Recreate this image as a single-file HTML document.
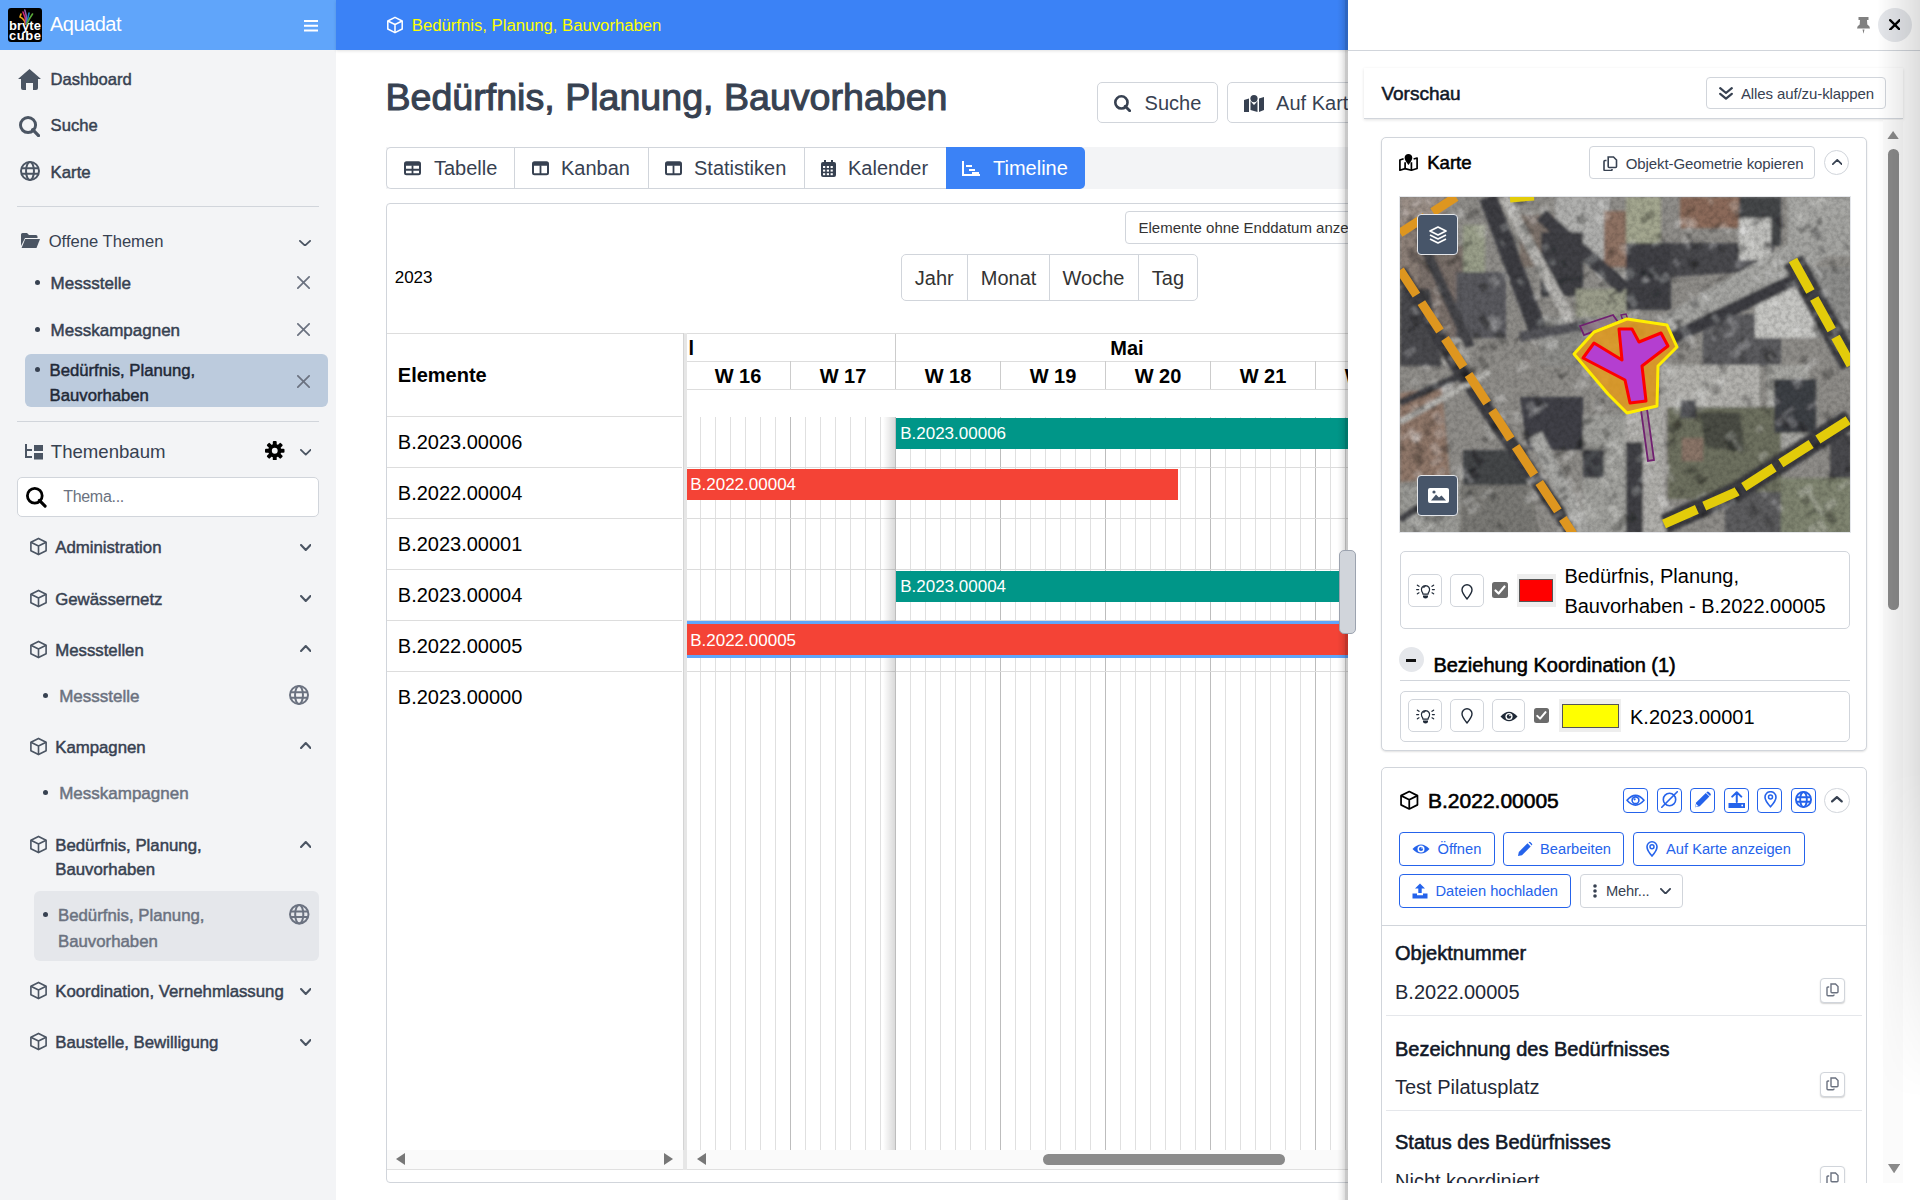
<!DOCTYPE html>
<html><head><meta charset="utf-8"><style>
*{box-sizing:border-box;margin:0;padding:0}
html,body{width:1920px;height:1200px;overflow:hidden;background:#fff;font-family:"Liberation Sans",sans-serif;color:#374151}
.a{position:absolute}
.t{position:absolute;white-space:nowrap;line-height:1}
svg{display:block}
</style></head><body>
<div class="a" style="left:0.0px;top:0.0px;width:336.0px;height:1200.0px;background:#f3f4f6"></div>
<div class="a" style="left:0.0px;top:0.0px;width:336.0px;height:50.0px;background:#60a5fa"></div>
<div class="a" style="left:8px;top:8px;width:34px;height:34px;background:#000;border-radius:3px;overflow:hidden"></div>
<div class="t" style="left:9.1px;top:18.90px;font-size:13px;color:#fff;font-weight:bold;letter-spacing:0px;">bryte</div>
<div class="t" style="left:9.1px;top:29.40px;font-size:13px;color:#fff;font-weight:bold;letter-spacing:0.5px;">cube</div>
<svg class="a" style="left:18.0px;top:9.0px;" width="16" height="16" viewBox="0 0 16 16"><g fill="none" stroke-width="1.6" stroke-linecap="round"><path d="M7.5 15 Q6.5 10 2 8 M3 5 L2 8" stroke="#e8a21a"/><path d="M7.8 15 Q8 9 5 3" stroke="#d2236e"/><path d="M8.2 15 Q9 7 6.8 1" stroke="#8e5aa8"/><path d="M8.5 15 Q10 9 11 4" stroke="#1e7fc0"/><path d="M8.8 15 Q11 10 14.5 5" stroke="#5aa83a"/></g></svg>
<div class="t" style="left:50.0px;top:14.07px;font-size:20px;color:#fff;font-weight:normal;letter-spacing:-0.5px;">Aquadat</div>
<svg class="a" style="left:304.0px;top:20.0px;" width="14" height="11.5" viewBox="0 0 14 11.5"><rect x="0" y="0" width="14" height="2" fill="#fff"/><rect x="0" y="4.75" width="14" height="2" fill="#fff"/><rect x="0" y="9.5" width="14" height="2" fill="#fff"/></svg>
<svg class="a" style="left:18.0px;top:69.0px;" width="23" height="21" viewBox="0 0 23 21"><path d="M11.5 0 L23 10 L20 10 L20 19 Q20 21 18 21 L15 21 L15 14 L8 14 L8 21 L5 21 Q3 21 3 19 L3 10 L0 10 Z" fill="#4b5563"/></svg>
<div class="t" style="left:50.6px;top:71.95px;font-size:16.6px;color:#374151;font-weight:normal;letter-spacing:0px;-webkit-text-stroke:0.46px #374151;">Dashboard</div>
<svg class="a" style="left:19.0px;top:116.0px;" width="21" height="21" viewBox="0 0 21 21"><circle cx="9.03" cy="9.03" r="7.56" fill="none" stroke="#4b5563" stroke-width="2.94"/><line x1="13.72" y1="13.72" x2="19.53" y2="19.53" stroke="#4b5563" stroke-width="3.23" stroke-linecap="round"/></svg>
<div class="t" style="left:50.6px;top:117.95px;font-size:16.6px;color:#374151;font-weight:normal;letter-spacing:0px;-webkit-text-stroke:0.46px #374151;">Suche</div>
<svg class="a" style="left:19.5px;top:161.0px;" width="20" height="20" viewBox="0 0 20 20"><g fill="none" stroke="#4b5563" stroke-width="2"><circle cx="10.0" cy="10.0" r="9.0"/><ellipse cx="10.0" cy="10.0" rx="3.96" ry="9.0"/><path d="M1.41 7.30 H18.59 M1.41 12.70 H18.59"/></g></svg>
<div class="t" style="left:50.6px;top:164.78px;font-size:16.8px;color:#374151;font-weight:normal;letter-spacing:0px;-webkit-text-stroke:0.47px #374151;">Karte</div>
<div class="a" style="left:17.0px;top:205.5px;width:302.0px;height:1.0px;background:#d1d5db"></div>
<svg class="a" style="left:21.0px;top:233.0px;" width="19" height="15" viewBox="0 0 19 15"><path d="M0 1.5 Q0 0 1.5 0 L6 0 L8 2 L15 2 Q16.5 2 16.5 3.5 L16.5 5 L4 5 L0 13 Z" fill="#4b5563"/><path d="M4.2 6 L19 6 L15.5 15 L0.6 15 Z" fill="#4b5563"/></svg>
<div class="t" style="left:48.7px;top:233.95px;font-size:16.6px;color:#374151;font-weight:normal;letter-spacing:0px;">Offene Themen</div>
<svg class="a" style="left:299.0px;top:239.5px;" width="12" height="6.5" viewBox="0 0 12 6.5"><path d="M0.9 0.9 L6.0 5.6 L11.1 0.9" fill="none" stroke="#4b5563" stroke-width="1.8" stroke-linecap="round" stroke-linejoin="round"/></svg>
<div class="a" style="left:34.5px;top:279.5px;width:5.0px;height:5.0px;background:#374151;border-radius:50%"></div>
<div class="t" style="left:50.6px;top:274.61px;font-size:17px;color:#374151;font-weight:normal;letter-spacing:0px;-webkit-text-stroke:0.48px #374151;">Messstelle</div>
<svg class="a" style="left:297.0px;top:275.5px;" width="13" height="13" viewBox="0 0 13 13"><path d="M0.85 0.85 L12.15 12.15 M12.15 0.85 L0.85 12.15" stroke="#6b7280" stroke-width="1.7" stroke-linecap="round"/></svg>
<div class="a" style="left:34.5px;top:326.5px;width:5.0px;height:5.0px;background:#374151;border-radius:50%"></div>
<div class="t" style="left:50.6px;top:321.61px;font-size:17px;color:#374151;font-weight:normal;letter-spacing:0px;-webkit-text-stroke:0.48px #374151;">Messkampagnen</div>
<svg class="a" style="left:297.0px;top:322.5px;" width="13" height="13" viewBox="0 0 13 13"><path d="M0.85 0.85 L12.15 12.15 M12.15 0.85 L0.85 12.15" stroke="#6b7280" stroke-width="1.7" stroke-linecap="round"/></svg>
<div class="a" style="left:25.0px;top:354.4px;width:302.6px;height:53.1px;background:#bccbdd;border-radius:6px"></div>
<div class="a" style="left:34.5px;top:367.0px;width:5.0px;height:5.0px;background:#374151;border-radius:50%"></div>
<div class="t" style="left:49.6px;top:362.86px;font-size:16.7px;color:#1f2937;font-weight:normal;letter-spacing:0px;-webkit-text-stroke:0.47px #1f2937;">Bedürfnis, Planung,</div>
<div class="t" style="left:49.6px;top:387.66px;font-size:16.7px;color:#1f2937;font-weight:normal;letter-spacing:0px;-webkit-text-stroke:0.47px #1f2937;">Bauvorhaben</div>
<svg class="a" style="left:297.0px;top:374.5px;" width="13" height="13" viewBox="0 0 13 13"><path d="M0.85 0.85 L12.15 12.15 M12.15 0.85 L0.85 12.15" stroke="#6b7280" stroke-width="1.7" stroke-linecap="round"/></svg>
<div class="a" style="left:17.0px;top:421.0px;width:302.0px;height:1.0px;background:#d1d5db"></div>
<svg class="a" style="left:24.8px;top:444.0px;" width="18" height="16" viewBox="0 0 18 16"><path d="M1 0 V13 H7" fill="none" stroke="#4b5563" stroke-width="2"/><path d="M1 6 H7" stroke="#4b5563" stroke-width="2"/><rect x="9" y="1" width="9" height="6" fill="#4b5563"/><rect x="9" y="9" width="9" height="6.5" fill="#4b5563"/></svg>
<div class="t" style="left:50.8px;top:442.76px;font-size:18.6px;color:#374151;font-weight:normal;letter-spacing:0px;">Themenbaum</div>
<svg class="a" style="left:265.0px;top:440.7px;" width="19.5" height="19.5" viewBox="0 0 20 20"><g fill="#000"><circle cx="10" cy="10" r="6.8"/><rect x="8" y="0" width="4" height="5" rx="1" transform="rotate(0 10 10)"/><rect x="8" y="0" width="4" height="5" rx="1" transform="rotate(45 10 10)"/><rect x="8" y="0" width="4" height="5" rx="1" transform="rotate(90 10 10)"/><rect x="8" y="0" width="4" height="5" rx="1" transform="rotate(135 10 10)"/><rect x="8" y="0" width="4" height="5" rx="1" transform="rotate(180 10 10)"/><rect x="8" y="0" width="4" height="5" rx="1" transform="rotate(225 10 10)"/><rect x="8" y="0" width="4" height="5" rx="1" transform="rotate(270 10 10)"/><rect x="8" y="0" width="4" height="5" rx="1" transform="rotate(315 10 10)"/></g><circle cx="10" cy="10" r="3" fill="#f3f4f6"/></svg>
<svg class="a" style="left:299.6px;top:449.0px;" width="11.5" height="6.5" viewBox="0 0 11.5 6.5"><path d="M0.9 0.9 L5.75 5.6 L10.6 0.9" fill="none" stroke="#4b5563" stroke-width="1.8" stroke-linecap="round" stroke-linejoin="round"/></svg>
<div class="a" style="left:17.4px;top:476.7px;width:301.4px;height:40.7px;background:#fff;border:1px solid #d1d5db;border-radius:5px"></div>
<svg class="a" style="left:26.0px;top:487.0px;" width="20.5" height="20.5" viewBox="0 0 20.5 20.5"><circle cx="8.78" cy="8.78" r="7.38" fill="none" stroke="#000" stroke-width="2.80"/><line x1="13.36" y1="13.36" x2="19.10" y2="19.10" stroke="#000" stroke-width="3.08" stroke-linecap="round"/></svg>
<div class="t" style="left:63.2px;top:488.76px;font-size:16px;color:#6b7280;font-weight:normal;letter-spacing:-0.3px;">Thema...</div>
<svg class="a" style="left:28.5px;top:537.3px;" width="19" height="19" viewBox="0 0 20 20"><g fill="none" stroke="#4b5563" stroke-width="1.7" stroke-linejoin="round"><path d="M10 1.5 L18 5.5 L18 14.5 L10 18.5 L2 14.5 L2 5.5 Z"/><path d="M2 5.5 L10 9.5 L18 5.5 M10 9.5 V18.5"/></g></svg>
<div class="t" style="left:55.2px;top:540.38px;font-size:16.8px;color:#374151;font-weight:normal;letter-spacing:0px;-webkit-text-stroke:0.47px #374151;">Administration</div>
<svg class="a" style="left:299.6px;top:544.0px;" width="11.5" height="7" viewBox="0 0 11.5 7"><path d="M1.05 1.05 L5.75 5.95 L10.45 1.05" fill="none" stroke="#4b5563" stroke-width="2.1" stroke-linecap="round" stroke-linejoin="round"/></svg>
<svg class="a" style="left:28.5px;top:588.5px;" width="19" height="19" viewBox="0 0 20 20"><g fill="none" stroke="#4b5563" stroke-width="1.7" stroke-linejoin="round"><path d="M10 1.5 L18 5.5 L18 14.5 L10 18.5 L2 14.5 L2 5.5 Z"/><path d="M2 5.5 L10 9.5 L18 5.5 M10 9.5 V18.5"/></g></svg>
<div class="t" style="left:55.2px;top:591.58px;font-size:16.8px;color:#374151;font-weight:normal;letter-spacing:0px;-webkit-text-stroke:0.47px #374151;">Gewässernetz</div>
<svg class="a" style="left:299.6px;top:595.2px;" width="11.5" height="7" viewBox="0 0 11.5 7"><path d="M1.05 1.05 L5.75 5.95 L10.45 1.05" fill="none" stroke="#4b5563" stroke-width="2.1" stroke-linecap="round" stroke-linejoin="round"/></svg>
<svg class="a" style="left:28.5px;top:639.5px;" width="19" height="19" viewBox="0 0 20 20"><g fill="none" stroke="#4b5563" stroke-width="1.7" stroke-linejoin="round"><path d="M10 1.5 L18 5.5 L18 14.5 L10 18.5 L2 14.5 L2 5.5 Z"/><path d="M2 5.5 L10 9.5 L18 5.5 M10 9.5 V18.5"/></g></svg>
<div class="t" style="left:55.2px;top:642.58px;font-size:16.8px;color:#374151;font-weight:normal;letter-spacing:0px;-webkit-text-stroke:0.47px #374151;">Messstellen</div>
<svg class="a" style="left:299.6px;top:645.3px;" width="11.5" height="7" viewBox="0 0 11.5 7"><path d="M1.05 5.95 L5.75 1.05 L10.45 5.95" fill="none" stroke="#4b5563" stroke-width="2.1" stroke-linecap="round" stroke-linejoin="round"/></svg>
<div class="a" style="left:42.8px;top:693.0px;width:5.0px;height:5.0px;background:#374151;border-radius:50%"></div>
<div class="t" style="left:59.2px;top:687.61px;font-size:17px;color:#6b7280;font-weight:normal;letter-spacing:0px;-webkit-text-stroke:0.48px #6b7280;">Messstelle</div>
<svg class="a" style="left:289.3px;top:684.5px;" width="20" height="20" viewBox="0 0 20 20"><g fill="none" stroke="#6b7280" stroke-width="2"><circle cx="10.0" cy="10.0" r="9.0"/><ellipse cx="10.0" cy="10.0" rx="3.96" ry="9.0"/><path d="M1.41 7.30 H18.59 M1.41 12.70 H18.59"/></g></svg>
<svg class="a" style="left:28.5px;top:736.5px;" width="19" height="19" viewBox="0 0 20 20"><g fill="none" stroke="#4b5563" stroke-width="1.7" stroke-linejoin="round"><path d="M10 1.5 L18 5.5 L18 14.5 L10 18.5 L2 14.5 L2 5.5 Z"/><path d="M2 5.5 L10 9.5 L18 5.5 M10 9.5 V18.5"/></g></svg>
<div class="t" style="left:55.2px;top:739.58px;font-size:16.8px;color:#374151;font-weight:normal;letter-spacing:0px;-webkit-text-stroke:0.47px #374151;">Kampagnen</div>
<svg class="a" style="left:299.6px;top:742.3px;" width="11.5" height="7" viewBox="0 0 11.5 7"><path d="M1.05 5.95 L5.75 1.05 L10.45 5.95" fill="none" stroke="#4b5563" stroke-width="2.1" stroke-linecap="round" stroke-linejoin="round"/></svg>
<div class="a" style="left:42.8px;top:790.0px;width:5.0px;height:5.0px;background:#374151;border-radius:50%"></div>
<div class="t" style="left:59.2px;top:784.81px;font-size:17px;color:#6b7280;font-weight:normal;letter-spacing:0px;-webkit-text-stroke:0.48px #6b7280;">Messkampagnen</div>
<svg class="a" style="left:28.5px;top:834.7px;" width="19" height="19" viewBox="0 0 20 20"><g fill="none" stroke="#4b5563" stroke-width="1.7" stroke-linejoin="round"><path d="M10 1.5 L18 5.5 L18 14.5 L10 18.5 L2 14.5 L2 5.5 Z"/><path d="M2 5.5 L10 9.5 L18 5.5 M10 9.5 V18.5"/></g></svg>
<div class="t" style="left:55.2px;top:837.78px;font-size:16.8px;color:#374151;font-weight:normal;letter-spacing:0px;-webkit-text-stroke:0.47px #374151;">Bedürfnis, Planung,</div>
<div class="t" style="left:55.2px;top:862.48px;font-size:16.8px;color:#374151;font-weight:normal;letter-spacing:0px;-webkit-text-stroke:0.47px #374151;">Bauvorhaben</div>
<svg class="a" style="left:299.6px;top:840.5px;" width="11.5" height="7" viewBox="0 0 11.5 7"><path d="M1.05 5.95 L5.75 1.05 L10.45 5.95" fill="none" stroke="#4b5563" stroke-width="2.1" stroke-linecap="round" stroke-linejoin="round"/></svg>
<div class="a" style="left:33.9px;top:891.2px;width:285.0px;height:70.3px;background:#e5e7eb;border-radius:6px"></div>
<div class="a" style="left:42.8px;top:912.0px;width:5.0px;height:5.0px;background:#374151;border-radius:50%"></div>
<div class="t" style="left:58.0px;top:908.38px;font-size:16.8px;color:#6b7280;font-weight:normal;letter-spacing:0px;-webkit-text-stroke:0.47px #6b7280;">Bedürfnis, Planung,</div>
<div class="t" style="left:58.0px;top:933.78px;font-size:16.8px;color:#6b7280;font-weight:normal;letter-spacing:0px;-webkit-text-stroke:0.47px #6b7280;">Bauvorhaben</div>
<svg class="a" style="left:289.0px;top:904.0px;" width="20.5" height="20.5" viewBox="0 0 20.5 20.5"><g fill="none" stroke="#6b7280" stroke-width="2"><circle cx="10.25" cy="10.25" r="9.25"/><ellipse cx="10.25" cy="10.25" rx="4.07" ry="9.25"/><path d="M1.43 7.47 H19.07 M1.43 13.03 H19.07"/></g></svg>
<svg class="a" style="left:28.5px;top:981.3px;" width="19" height="19" viewBox="0 0 20 20"><g fill="none" stroke="#4b5563" stroke-width="1.7" stroke-linejoin="round"><path d="M10 1.5 L18 5.5 L18 14.5 L10 18.5 L2 14.5 L2 5.5 Z"/><path d="M2 5.5 L10 9.5 L18 5.5 M10 9.5 V18.5"/></g></svg>
<div class="t" style="left:55.2px;top:984.38px;font-size:16.8px;color:#374151;font-weight:normal;letter-spacing:0px;-webkit-text-stroke:0.47px #374151;">Koordination, Vernehmlassung</div>
<svg class="a" style="left:299.6px;top:988.0px;" width="11.5" height="7" viewBox="0 0 11.5 7"><path d="M1.05 1.05 L5.75 5.95 L10.45 1.05" fill="none" stroke="#4b5563" stroke-width="2.1" stroke-linecap="round" stroke-linejoin="round"/></svg>
<svg class="a" style="left:28.5px;top:1032.0px;" width="19" height="19" viewBox="0 0 20 20"><g fill="none" stroke="#4b5563" stroke-width="1.7" stroke-linejoin="round"><path d="M10 1.5 L18 5.5 L18 14.5 L10 18.5 L2 14.5 L2 5.5 Z"/><path d="M2 5.5 L10 9.5 L18 5.5 M10 9.5 V18.5"/></g></svg>
<div class="t" style="left:55.2px;top:1035.08px;font-size:16.8px;color:#374151;font-weight:normal;letter-spacing:0px;-webkit-text-stroke:0.47px #374151;">Baustelle, Bewilligung</div>
<svg class="a" style="left:299.6px;top:1038.7px;" width="11.5" height="7" viewBox="0 0 11.5 7"><path d="M1.05 1.05 L5.75 5.95 L10.45 1.05" fill="none" stroke="#4b5563" stroke-width="2.1" stroke-linecap="round" stroke-linejoin="round"/></svg>
<div class="a" style="left:336.0px;top:0.0px;width:1584.0px;height:50.0px;background:#3b82f6;box-shadow:0 1px 3px rgba(0,0,0,0.12)"></div>
<svg class="a" style="left:385.5px;top:16.0px;" width="18" height="18" viewBox="0 0 20 20"><g fill="none" stroke="#fff" stroke-width="1.7" stroke-linejoin="round"><path d="M10 1.5 L18 5.5 L18 14.5 L10 18.5 L2 14.5 L2 5.5 Z"/><path d="M2 5.5 L10 9.5 L18 5.5 M10 9.5 V18.5"/></g></svg>
<div class="t" style="left:411.8px;top:17.86px;font-size:16.7px;color:#ffff00;font-weight:normal;letter-spacing:0px;">Bedürfnis, Planung, Bauvorhaben</div>
<div class="t" style="left:385.5px;top:79.17px;font-size:37.6px;color:#374151;font-weight:normal;letter-spacing:0px;-webkit-text-stroke:1.05px #374151;">Bedürfnis, Planung, Bauvorhaben</div>
<div class="a" style="left:1097.2px;top:82.1px;width:120.5px;height:41.4px;background:#fff;border:1px solid #d1d5db;border-radius:5px"></div>
<svg class="a" style="left:1114.3px;top:95.0px;" width="17" height="17" viewBox="0 0 17 17"><circle cx="7.42" cy="7.42" r="6.12" fill="none" stroke="#374151" stroke-width="2.60"/><line x1="11.21" y1="11.21" x2="15.70" y2="15.70" stroke="#374151" stroke-width="2.86" stroke-linecap="round"/></svg>
<div class="t" style="left:1144.6px;top:92.77px;font-size:20px;color:#374151;font-weight:normal;letter-spacing:0px;">Suche</div>
<div class="a" style="left:1227.3px;top:82.1px;width:300.0px;height:41.4px;background:#fff;border:1px solid #d1d5db;border-radius:5px"></div>
<svg class="a" style="left:1244.4px;top:95.0px;" width="20" height="17" viewBox="0 0 20 17"><path d="M0 5 L5 3.5 L5 17 L0 17 Z M6.5 6 L9 9 L10 10 L11 9 L13.5 6 V17 L6.5 15 Z M15 3.5 L20 2 L20 15 L15 17 Z" fill="#374151"/><circle cx="10" cy="3.6" r="3.6" fill="#374151"/></svg>
<div class="t" style="left:1276.1px;top:92.77px;font-size:20px;color:#374151;font-weight:normal;letter-spacing:0px;">Auf Karte</div>
<div class="a" style="left:386.0px;top:147.0px;width:1200.0px;height:41.6px;background:#f3f4f6"></div>
<div class="a" style="left:386.0px;top:147.0px;width:560.0px;height:41.6px;background:#fff;border:1px solid #d1d5db;border-right:none;border-radius:5px 0 0 5px"></div>
<div class="a" style="left:514.0px;top:147.0px;width:1.0px;height:41.6px;background:#d1d5db"></div>
<div class="a" style="left:647.5px;top:147.0px;width:1.0px;height:41.6px;background:#d1d5db"></div>
<div class="a" style="left:803.6px;top:147.0px;width:1.0px;height:41.6px;background:#d1d5db"></div>
<div class="a" style="left:946.0px;top:147.0px;width:139.0px;height:41.6px;background:#3b82f6;border-radius:0 5px 5px 0"></div>
<svg class="a" style="left:404.0px;top:161.0px;" width="17" height="14.5" viewBox="0 0 17 14"><rect x="1" y="1" width="15" height="12" rx="1.5" fill="none" stroke="#374151" stroke-width="2"/><rect x="1" y="1" width="15" height="3.5" fill="#374151"/><path d="M8.5 4 V13 M1 8.5 H16" stroke="#374151" stroke-width="1.8"/></svg>
<div class="t" style="left:434.0px;top:158.07px;font-size:20px;color:#374151;font-weight:normal;letter-spacing:0px;">Tabelle</div>
<svg class="a" style="left:531.5px;top:161.0px;" width="17" height="14.5" viewBox="0 0 17 14"><rect x="1" y="1" width="15" height="12" rx="1.5" fill="none" stroke="#374151" stroke-width="2"/><rect x="1" y="1" width="15" height="3.5" fill="#374151"/><path d="M8.5 4 V13" stroke="#374151" stroke-width="1.8"/></svg>
<div class="t" style="left:561.0px;top:158.07px;font-size:20px;color:#374151;font-weight:normal;letter-spacing:0px;">Kanban</div>
<svg class="a" style="left:664.5px;top:161.0px;" width="17" height="14.5" viewBox="0 0 17 14"><rect x="1" y="1" width="15" height="12" rx="1.5" fill="none" stroke="#374151" stroke-width="2"/><rect x="1" y="1" width="15" height="3.5" fill="#374151"/><path d="M8.5 4 V13" stroke="#374151" stroke-width="1.8"/></svg>
<div class="t" style="left:694.0px;top:158.07px;font-size:20px;color:#374151;font-weight:normal;letter-spacing:0px;">Statistiken</div>
<svg class="a" style="left:820.5px;top:159.5px;" width="15" height="17" viewBox="0 0 15 17"><rect x="3" y="0" width="2" height="3" fill="#374151"/><rect x="10" y="0" width="2" height="3" fill="#374151"/><rect x="0" y="2" width="15" height="15" rx="2" fill="#374151"/><rect x="2.0" y="6.0" width="2.2" height="2" fill="#fff"/><rect x="2.0" y="9.6" width="2.2" height="2" fill="#fff"/><rect x="2.0" y="13.2" width="2.2" height="2" fill="#fff"/><rect x="5.8" y="6.0" width="2.2" height="2" fill="#fff"/><rect x="5.8" y="9.6" width="2.2" height="2" fill="#fff"/><rect x="5.8" y="13.2" width="2.2" height="2" fill="#fff"/><rect x="9.6" y="6.0" width="2.2" height="2" fill="#fff"/><rect x="9.6" y="9.6" width="2.2" height="2" fill="#fff"/><rect x="9.6" y="13.2" width="2.2" height="2" fill="#fff"/></svg>
<div class="t" style="left:848.0px;top:158.07px;font-size:20px;color:#374151;font-weight:normal;letter-spacing:0px;">Kalender</div>
<svg class="a" style="left:962.0px;top:161.0px;" width="18" height="15" viewBox="0 0 18 15"><path d="M1 0 V14 H18" fill="none" stroke="#fff" stroke-width="2"/><rect x="4" y="4" width="6" height="2" fill="#fff"/><rect x="7" y="8" width="6" height="2" fill="#fff"/><rect x="10" y="11" width="7" height="2" fill="#fff"/></svg>
<div class="t" style="left:993.0px;top:158.07px;font-size:20px;color:#fff;font-weight:normal;letter-spacing:0px;">Timeline</div>
<div class="a" style="left:386.0px;top:202.7px;width:1100.0px;height:980.0px;background:#fff;border:1px solid #d1d5db;border-radius:4px"></div>
<div class="a" style="left:1125.0px;top:211.4px;width:300.0px;height:33.0px;background:#fff;border:1px solid #d1d5db;border-radius:4px"></div>
<div class="t" style="left:1138.5px;top:220.00px;font-size:15px;color:#333;font-weight:normal;letter-spacing:0px;">Elemente ohne Enddatum anzeigen</div>
<div class="t" style="left:394.7px;top:268.61px;font-size:17px;color:#000;font-weight:normal;letter-spacing:0px;">2023</div>
<div class="a" style="left:901.4px;top:254.2px;width:296.4px;height:47.2px;background:#fff;border:1px solid #d1d5db;border-radius:5px"></div>
<div class="a" style="left:967.4px;top:254.2px;width:1.0px;height:47.2px;background:#d1d5db"></div>
<div class="a" style="left:1049.4px;top:254.2px;width:1.0px;height:47.2px;background:#d1d5db"></div>
<div class="a" style="left:1137.6px;top:254.2px;width:1.0px;height:47.2px;background:#d1d5db"></div>
<div class="t" style="left:914.8px;top:267.67px;font-size:20px;color:#333;font-weight:normal;letter-spacing:0px;">Jahr</div>
<div class="t" style="left:980.8px;top:267.67px;font-size:20px;color:#333;font-weight:normal;letter-spacing:0px;">Monat</div>
<div class="t" style="left:1062.6px;top:267.67px;font-size:20px;color:#333;font-weight:normal;letter-spacing:0px;">Woche</div>
<div class="t" style="left:1151.8px;top:267.67px;font-size:20px;color:#333;font-weight:normal;letter-spacing:0px;">Tag</div>
<div class="a" style="left:387.0px;top:333.0px;width:1000.0px;height:1.0px;background:#ddd"></div>
<div class="t" style="left:397.8px;top:365.07px;font-size:20px;color:#000;font-weight:bold;letter-spacing:0px;">Elemente</div>
<div class="a" style="left:387.0px;top:416.0px;width:295.4px;height:1.0px;background:#ddd"></div>
<div class="a" style="left:387.0px;top:467.0px;width:295.4px;height:1.0px;background:#ddd"></div>
<div class="a" style="left:387.0px;top:518.0px;width:295.4px;height:1.0px;background:#ddd"></div>
<div class="a" style="left:387.0px;top:569.0px;width:295.4px;height:1.0px;background:#ddd"></div>
<div class="a" style="left:387.0px;top:620.0px;width:295.4px;height:1.0px;background:#ddd"></div>
<div class="a" style="left:387.0px;top:671.0px;width:295.4px;height:1.0px;background:#ddd"></div>
<div class="t" style="left:397.8px;top:431.57px;font-size:20px;color:#000;font-weight:normal;letter-spacing:0px;">B.2023.00006</div>
<div class="t" style="left:397.8px;top:482.57px;font-size:20px;color:#000;font-weight:normal;letter-spacing:0px;">B.2022.00004</div>
<div class="t" style="left:397.8px;top:533.57px;font-size:20px;color:#000;font-weight:normal;letter-spacing:0px;">B.2023.00001</div>
<div class="t" style="left:397.8px;top:584.57px;font-size:20px;color:#000;font-weight:normal;letter-spacing:0px;">B.2023.00004</div>
<div class="t" style="left:397.8px;top:635.57px;font-size:20px;color:#000;font-weight:normal;letter-spacing:0px;">B.2022.00005</div>
<div class="t" style="left:397.8px;top:686.57px;font-size:20px;color:#000;font-weight:normal;letter-spacing:0px;">B.2023.00000</div>
<div class="a" style="left:682.5px;top:333.0px;width:4.0px;height:817.0px;background:#e6e6e6"></div>
<div class="a" style="left:682.5px;top:333.0px;width:1.0px;height:817.0px;background:#d4d4d4"></div>
<div class="a" style="left:686.5px;top:361.0px;width:700.0px;height:1.0px;background:#ddd"></div>
<div class="a" style="left:686.5px;top:389.0px;width:700.0px;height:1.0px;background:#ddd"></div>
<div class="a" style="left:895.0px;top:334.0px;width:1.0px;height:55.0px;background:#ccc"></div>
<div class="t" style="left:738.0px;top:366.07px;font-size:20px;color:#000;font-weight:bold;letter-spacing:0px;transform:translateX(-50%)">W 16</div>
<div class="a" style="left:790.0px;top:361.0px;width:1.0px;height:28.0px;background:#ccc"></div>
<div class="t" style="left:843.0px;top:366.07px;font-size:20px;color:#000;font-weight:bold;letter-spacing:0px;transform:translateX(-50%)">W 17</div>
<div class="a" style="left:895.0px;top:361.0px;width:1.0px;height:28.0px;background:#ccc"></div>
<div class="t" style="left:948.0px;top:366.07px;font-size:20px;color:#000;font-weight:bold;letter-spacing:0px;transform:translateX(-50%)">W 18</div>
<div class="a" style="left:1000.0px;top:361.0px;width:1.0px;height:28.0px;background:#ccc"></div>
<div class="t" style="left:1053.0px;top:366.07px;font-size:20px;color:#000;font-weight:bold;letter-spacing:0px;transform:translateX(-50%)">W 19</div>
<div class="a" style="left:1105.0px;top:361.0px;width:1.0px;height:28.0px;background:#ccc"></div>
<div class="t" style="left:1158.0px;top:366.07px;font-size:20px;color:#000;font-weight:bold;letter-spacing:0px;transform:translateX(-50%)">W 20</div>
<div class="a" style="left:1210.0px;top:361.0px;width:1.0px;height:28.0px;background:#ccc"></div>
<div class="t" style="left:1263.0px;top:366.07px;font-size:20px;color:#000;font-weight:bold;letter-spacing:0px;transform:translateX(-50%)">W 21</div>
<div class="a" style="left:1315.0px;top:361.0px;width:1.0px;height:28.0px;background:#ccc"></div>
<div class="t" style="left:1368.0px;top:366.07px;font-size:20px;color:#000;font-weight:bold;letter-spacing:0px;transform:translateX(-50%)">W 22</div>
<div class="t" style="left:688.5px;top:337.77px;font-size:20px;color:#000;font-weight:bold;letter-spacing:0px;">l</div>
<div class="t" style="left:1127.0px;top:338.07px;font-size:20px;color:#000;font-weight:bold;letter-spacing:0px;transform:translateX(-50%)">Mai</div>
<div class="a" style="left:700.0px;top:417px;width:1px;height:732.7px;background:#e0e0e0"></div><div class="a" style="left:715.0px;top:417px;width:1px;height:732.7px;background:#e0e0e0"></div><div class="a" style="left:730.0px;top:417px;width:1px;height:732.7px;background:#e0e0e0"></div><div class="a" style="left:745.0px;top:417px;width:1px;height:732.7px;background:#e0e0e0"></div><div class="a" style="left:760.0px;top:417px;width:1px;height:732.7px;background:#e0e0e0"></div><div class="a" style="left:775.0px;top:417px;width:1px;height:732.7px;background:#e0e0e0"></div><div class="a" style="left:790.0px;top:417px;width:1px;height:732.7px;background:#bdbdbd"></div><div class="a" style="left:805.0px;top:417px;width:1px;height:732.7px;background:#e0e0e0"></div><div class="a" style="left:820.0px;top:417px;width:1px;height:732.7px;background:#e0e0e0"></div><div class="a" style="left:835.0px;top:417px;width:1px;height:732.7px;background:#e0e0e0"></div><div class="a" style="left:850.0px;top:417px;width:1px;height:732.7px;background:#e0e0e0"></div><div class="a" style="left:865.0px;top:417px;width:1px;height:732.7px;background:#e0e0e0"></div><div class="a" style="left:880.0px;top:417px;width:1px;height:732.7px;background:#e0e0e0"></div><div class="a" style="left:895.0px;top:417px;width:1px;height:732.7px;background:#bdbdbd"></div><div class="a" style="left:910.0px;top:417px;width:1px;height:732.7px;background:#e0e0e0"></div><div class="a" style="left:925.0px;top:417px;width:1px;height:732.7px;background:#e0e0e0"></div><div class="a" style="left:940.0px;top:417px;width:1px;height:732.7px;background:#e0e0e0"></div><div class="a" style="left:955.0px;top:417px;width:1px;height:732.7px;background:#e0e0e0"></div><div class="a" style="left:970.0px;top:417px;width:1px;height:732.7px;background:#e0e0e0"></div><div class="a" style="left:985.0px;top:417px;width:1px;height:732.7px;background:#e0e0e0"></div><div class="a" style="left:1000.0px;top:417px;width:1px;height:732.7px;background:#bdbdbd"></div><div class="a" style="left:1015.0px;top:417px;width:1px;height:732.7px;background:#e0e0e0"></div><div class="a" style="left:1030.0px;top:417px;width:1px;height:732.7px;background:#e0e0e0"></div><div class="a" style="left:1045.0px;top:417px;width:1px;height:732.7px;background:#e0e0e0"></div><div class="a" style="left:1060.0px;top:417px;width:1px;height:732.7px;background:#e0e0e0"></div><div class="a" style="left:1075.0px;top:417px;width:1px;height:732.7px;background:#e0e0e0"></div><div class="a" style="left:1090.0px;top:417px;width:1px;height:732.7px;background:#e0e0e0"></div><div class="a" style="left:1105.0px;top:417px;width:1px;height:732.7px;background:#bdbdbd"></div><div class="a" style="left:1120.0px;top:417px;width:1px;height:732.7px;background:#e0e0e0"></div><div class="a" style="left:1135.0px;top:417px;width:1px;height:732.7px;background:#e0e0e0"></div><div class="a" style="left:1150.0px;top:417px;width:1px;height:732.7px;background:#e0e0e0"></div><div class="a" style="left:1165.0px;top:417px;width:1px;height:732.7px;background:#e0e0e0"></div><div class="a" style="left:1180.0px;top:417px;width:1px;height:732.7px;background:#e0e0e0"></div><div class="a" style="left:1195.0px;top:417px;width:1px;height:732.7px;background:#e0e0e0"></div><div class="a" style="left:1210.0px;top:417px;width:1px;height:732.7px;background:#bdbdbd"></div><div class="a" style="left:1225.0px;top:417px;width:1px;height:732.7px;background:#e0e0e0"></div><div class="a" style="left:1240.0px;top:417px;width:1px;height:732.7px;background:#e0e0e0"></div><div class="a" style="left:1255.0px;top:417px;width:1px;height:732.7px;background:#e0e0e0"></div><div class="a" style="left:1270.0px;top:417px;width:1px;height:732.7px;background:#e0e0e0"></div><div class="a" style="left:1285.0px;top:417px;width:1px;height:732.7px;background:#e0e0e0"></div><div class="a" style="left:1300.0px;top:417px;width:1px;height:732.7px;background:#e0e0e0"></div><div class="a" style="left:1315.0px;top:417px;width:1px;height:732.7px;background:#bdbdbd"></div><div class="a" style="left:1330.0px;top:417px;width:1px;height:732.7px;background:#e0e0e0"></div><div class="a" style="left:1345.0px;top:417px;width:1px;height:732.7px;background:#e0e0e0"></div>
<div class="a" style="left:686.5px;top:467.0px;width:670.0px;height:1.0px;background:#dcdcdc"></div>
<div class="a" style="left:686.5px;top:518.0px;width:670.0px;height:1.0px;background:#dcdcdc"></div>
<div class="a" style="left:686.5px;top:569.0px;width:670.0px;height:1.0px;background:#dcdcdc"></div>
<div class="a" style="left:686.5px;top:620.0px;width:670.0px;height:1.0px;background:#dcdcdc"></div>
<div class="a" style="left:686.5px;top:671.0px;width:670.0px;height:1.0px;background:#dcdcdc"></div>
<div class="a" style="left:883.0px;top:417.0px;width:12.5px;height:732.7px;background:linear-gradient(to right,rgba(0,0,0,0),rgba(0,0,0,0.16))"></div>
<div class="a" style="left:895.0px;top:417.0px;width:1.0px;height:732.7px;background:#bdbdbd"></div>
<div class="a" style="left:896.0px;top:418.2px;width:460.0px;height:30.5px;background:#009688"></div>
<div class="t" style="left:900.2px;top:424.91px;font-size:17px;color:#fff;font-weight:normal;letter-spacing:0px;">B.2023.00006</div>
<div class="a" style="left:686.5px;top:469.0px;width:491.2px;height:31.0px;background:#f44336"></div>
<div class="t" style="left:690.2px;top:475.91px;font-size:17px;color:#fff;font-weight:normal;letter-spacing:0px;">B.2022.00004</div>
<div class="a" style="left:896.0px;top:571.0px;width:460.0px;height:30.7px;background:#009688"></div>
<div class="t" style="left:900.2px;top:577.91px;font-size:17px;color:#fff;font-weight:normal;letter-spacing:0px;">B.2023.00004</div>
<div class="a" style="left:686.5px;top:621.0px;width:670.0px;height:37.0px;background:#60a5fa"></div>
<div class="a" style="left:686.5px;top:624.0px;width:670.0px;height:31.0px;background:#f44336"></div>
<div class="t" style="left:690.2px;top:631.61px;font-size:17px;color:#fff;font-weight:normal;letter-spacing:0px;">B.2022.00005</div>
<div class="a" style="left:387.0px;top:1149.7px;width:1000.0px;height:19.5px;background:#fafafa"></div>
<div class="a" style="left:387.0px;top:1169.0px;width:1000.0px;height:1.0px;background:#e0e0e0"></div>
<div class="a" style="left:682.5px;top:1149.7px;width:4.0px;height:20.0px;background:#e6e6e6"></div>
<svg class="a" style="left:396.0px;top:1153.0px;" width="10" height="12" viewBox="0 0 10 12"><path d="M9 0 V12 L0 6 Z" fill="#777"/></svg>
<svg class="a" style="left:663.0px;top:1153.0px;" width="10" height="12" viewBox="0 0 10 12"><path d="M1 0 V12 L10 6 Z" fill="#777"/></svg>
<svg class="a" style="left:697.0px;top:1153.0px;" width="10" height="12" viewBox="0 0 10 12"><path d="M9 0 V12 L0 6 Z" fill="#777"/></svg>
<div class="a" style="left:1043.0px;top:1154.2px;width:241.7px;height:10.5px;background:#8a8a8a;border-radius:5.25px"></div>
<div class="a" style="left:1337.0px;top:0.0px;width:11.0px;height:1200.0px;background:linear-gradient(to right,rgba(0,0,0,0) 0%,rgba(0,0,0,0.05) 40%,rgba(0,0,0,0.13) 72%,rgba(0,0,0,0.21) 74%,rgba(0,0,0,0.22) 100%)"></div>
<div class="a" style="left:1347.5px;top:0.0px;width:572.5px;height:1200.0px;background:#fff"></div>
<div class="a" style="left:1347.5px;top:50.0px;width:572.5px;height:1.0px;background:#d1d5db"></div>
<svg class="a" style="left:1857.0px;top:17.0px;" width="13" height="17" viewBox="0 0 13 17"><path d="M1.5 0 H11.5 V3 H10 L10.3 7.5 Q13 9 13 11.5 H0 Q0 9 2.7 7.5 L3 3 H1.5 Z" fill="#808080"/><path d="M5.5 12.5 H7.5 L6.5 16.8 Z" fill="#808080"/></svg>
<div class="a" style="left:1878.0px;top:8.0px;width:34.0px;height:34.0px;background:#e5e7eb;border-radius:50%"></div>
<svg class="a" style="left:1888.7px;top:18.7px;" width="11.8" height="11.8" viewBox="0 0 11.8 11.8"><path d="M1.15 1.15 L10.65 10.65 M10.65 1.15 L1.15 10.65" stroke="#000" stroke-width="2.3" stroke-linecap="round"/></svg>
<div class="a" style="left:1363.6px;top:67.8px;width:539.6px;height:51.5px;background:#fff;box-shadow:0 1px 3px rgba(0,0,0,0.12);border-bottom:1px solid #d1d5db"></div>
<div class="t" style="left:1381.4px;top:84.22px;font-size:19px;color:#111827;font-weight:normal;letter-spacing:0px;-webkit-text-stroke:0.53px #111827;">Vorschau</div>
<div class="a" style="left:1706.4px;top:77.4px;width:179.5px;height:32.1px;background:#fff;border:1px solid #d1d5db;border-radius:4px"></div>
<svg class="a" style="left:1718.7px;top:87.0px;" width="14" height="13" viewBox="0 0 14 13"><path d="M1.2 1.2 L7 6 L12.8 1.2 M1.2 6.8 L7 11.6 L12.8 6.8" fill="none" stroke="#374151" stroke-width="2.2" stroke-linecap="round" stroke-linejoin="round"/></svg>
<div class="t" style="left:1740.9px;top:86.20px;font-size:15px;color:#374151;font-weight:normal;letter-spacing:-0.1px;">Alles auf/zu-klappen</div>
<div class="a" style="left:1883.0px;top:120.0px;width:20.0px;height:1062.5px;background:#fbfbfb"></div>
<svg class="a" style="left:1887.4px;top:130.7px;" width="12.2" height="8.6" viewBox="0 0 12.2 8.6"><path d="M6.1 0 L12.2 8.6 H0 Z" fill="#8a8a8a"/></svg>
<div class="a" style="left:1888.3px;top:149.2px;width:10.7px;height:461.0px;background:#8a8a8a;border-radius:5.3px"></div>
<svg class="a" style="left:1887.5px;top:1164.0px;" width="12.2" height="9.3" viewBox="0 0 12.2 9.3"><path d="M0 0 H12.2 L6.1 9.3 Z" fill="#8a8a8a"/></svg>
<div class="a" style="left:1877.0px;top:0.0px;width:43.0px;height:1100.0px;background:linear-gradient(to right,rgba(0,0,0,0),rgba(0,0,0,0.13));-webkit-mask-image:linear-gradient(to bottom,#000 70%,transparent)"></div>
<div class="a" style="left:1381.4px;top:137.4px;width:485.2px;height:613.6px;background:#fff;border:1px solid #d1d5db;border-radius:5px;box-shadow:0 1px 2px rgba(0,0,0,0.12)"></div>
<svg class="a" style="left:1399.1px;top:153.8px;" width="19" height="17" viewBox="0 0 19 17"><path d="M4.6 4.8 L0.9 6 V16.2 L6.1 14.6 L12.4 16.2 L18.1 14.5 V4 L14.6 5" fill="none" stroke="#000" stroke-width="1.7" stroke-linejoin="round"/><path d="M6.1 8.3 V14.6 M12.4 8.3 V16.2" stroke="#000" stroke-width="1.7"/><path d="M9.45 0 C7.3 0 5.6 1.7 5.6 3.85 C5.6 6.5 9.45 11 9.45 11 C9.45 11 13.3 6.5 13.3 3.85 C13.3 1.7 11.6 0 9.45 0 Z" fill="#000"/></svg>
<div class="t" style="left:1427.2px;top:154.26px;font-size:18.6px;color:#000;font-weight:normal;letter-spacing:0px;-webkit-text-stroke:0.52px #000;">Karte</div>
<div class="a" style="left:1589.0px;top:146.2px;width:226.4px;height:33.3px;background:#fff;border:1px solid #d1d5db;border-radius:4px"></div>
<svg class="a" style="left:1603.0px;top:155.5px;" width="14.5" height="15.5" viewBox="0 0 14.5 15.5"><path d="M5.2 1 H10.5 L13.5 4 V10.5 Q13.5 11.5 12.5 11.5 H6.2 Q5.2 11.5 5.2 10.5 Z" fill="none" stroke="#374151" stroke-width="1.6"/><path d="M3.5 4.5 H2 Q1 4.5 1 5.5 V13.5 Q1 14.5 2 14.5 H8 Q9 14.5 9 13.5 V13" fill="none" stroke="#374151" stroke-width="1.6"/></svg>
<div class="t" style="left:1625.8px;top:155.90px;font-size:15px;color:#374151;font-weight:normal;letter-spacing:-0.1px;">Objekt-Geometrie kopieren</div>
<div class="a" style="left:1824.1px;top:149.8px;width:25.2px;height:25.2px;background:#fff;border:1px solid #d1d5db;border-radius:50%"></div>
<svg class="a" style="left:1831.5px;top:158.8px;" width="10.5" height="6" viewBox="0 0 10.5 6"><path d="M0.85 5.15 L5.25 0.85 L9.65 5.15" fill="none" stroke="#374151" stroke-width="1.7" stroke-linecap="round" stroke-linejoin="round"/></svg>
<svg class="a" style="left:1399.5px;top:196.6px;outline:1px solid #e5e7eb" width="450" height="335.5" viewBox="0 0 450 335.5"><defs><filter id="nz" x="0" y="0" width="100%" height="100%"><feTurbulence type="fractalNoise" baseFrequency="0.22" numOctaves="3" seed="5"/><feColorMatrix type="matrix" values="0 0 0 0 0  0 0 0 0 0  0 0 0 0 0  0 0 0 -1.6 1.05"/></filter><filter id="nz2" x="0" y="0" width="100%" height="100%"><feTurbulence type="fractalNoise" baseFrequency="0.09" numOctaves="2" seed="11"/><feColorMatrix type="matrix" values="2.2 0 0 0 -0.6  2.2 0 0 0 -0.6  2.2 0 0 0 -0.6  0 0 0 0 1"/></filter></defs><defs><filter id="bl" x="-5%" y="-5%" width="110%" height="110%"><feGaussianBlur stdDeviation="1.6"/></filter></defs><rect width="450" height="335.5" fill="#8f8d89"/><g filter="url(#bl)"><polygon points="0,0 46,0 46,28 0,28" fill="#9a8e86"/><polygon points="0,28 18,28 18,92 0,92" fill="#8d8078"/><polygon points="18,49 63,49 63,141 18,141" fill="#7a706a"/><polygon points="0,92 30,92 42,169 0,169" fill="#4a4a4e"/><polygon points="42,141 70,141 70,169 42,169" fill="#a6a4a0"/><polygon points="63,28 85,28 85,77 63,77" fill="#9a9f8a"/><polygon points="56,75 106,75 106,141 56,141" fill="#5a5a5e"/><polygon points="120,18 155,18 155,70 120,70" fill="#7e736c"/><polygon points="155,0 210,0 210,63 155,63" fill="#b0b0ae"/><polygon points="204,14 226,14 226,70 204,70" fill="#8e7263"/><polygon points="141,35 183,35 183,99 141,99" fill="#3f4045"/><polygon points="176,92 226,92 226,120 176,120" fill="#9a9c8a"/><polygon points="140,120 226,120 226,169 140,169" fill="#8d8d8a"/><polygon points="226,0 261,0 261,46 226,46" fill="#a3a68f"/><polygon points="226,46 271,46 271,113 226,113" fill="#3f4045"/><polygon points="280,0 339,0 339,31 280,31" fill="#8b6b5a"/><polygon points="271,46 374,46 374,73 271,80" fill="#4a4a4e"/><polygon points="339,0 381,0 381,49 339,49" fill="#45464a"/><polygon points="339,21 371,21 371,63 339,63" fill="#c2c2bf"/><polygon points="388,0 451,0 451,59 388,59" fill="#a8a8a5"/><polygon points="409,70 451,70 451,141 409,141" fill="#8d8d8b"/><polygon points="303,120 381,115 381,169 303,169" fill="#5c5c5f"/><polygon points="355,92 416,92 416,141 355,141" fill="#c6c6c3"/><polygon points="0,196 42,190 50,281 0,285" fill="#8f7769"/><polygon points="0,290 60,285 60,337 0,337" fill="#9b9b97"/><polygon points="63,253 127,253 127,288 63,288" fill="#45464a"/><polygon points="120,200 183,200 183,253 127,253" fill="#404146"/><polygon points="183,218 226,218 226,337 183,337" fill="#a0a09c"/><polygon points="183,253 204,253 204,281 183,281" fill="#4a4b4f"/><polygon points="60,288 130,288 140,337 60,337" fill="#7a7975"/><polygon points="261,168 360,168 360,210 261,210" fill="#b3b2ae"/><polygon points="367,168 409,168 409,253 367,253" fill="#a7a7a3"/><polygon points="268,210 381,210 381,302 268,302" fill="#6d705f"/><polygon points="280,203 296,203 296,221 280,221" fill="#55565a"/><polygon points="282,241 303,241 303,264 282,264" fill="#8a7468"/><polygon points="300,215 340,215 345,255 305,250" fill="#4b4d45"/><polygon points="226,210 265,210 265,337 226,337" fill="#b0afab"/><polygon points="226,245 243,245 243,337 226,337" fill="#3f4044"/><polygon points="374,182 416,182 416,236 374,236" fill="#3e3f44"/><polygon points="381,281 451,281 451,337 381,337" fill="#7f8470"/><polygon points="430,238 451,238 451,281 430,281" fill="#4a4a4e"/><polygon points="325,295 381,295 381,337 325,337" fill="#5d5d5f"/><path d="M88 0 L138 134" stroke="#3c3d42" stroke-width="18" fill="none"/><path d="M104 0 L176 134" stroke="#b5b4b0" stroke-width="11" fill="none"/><path d="M141 18 L225 92" stroke="#3f4045" stroke-width="14" fill="none"/><path d="M20 40 L70 150" stroke="#444549" stroke-width="10" fill="none"/><path d="M268 134 L451 28" stroke="#a5a5a2" stroke-width="31" fill="none"/><path d="M272 141 L402 79" stroke="#3c3d42" stroke-width="13" fill="none"/><path d="M393 63 L451 168" stroke="#3f4044" stroke-width="22" fill="none"/><path d="M0 206 L59 179" stroke="#3f4044" stroke-width="7" fill="none"/><path d="M56 168 L173 336" stroke="#3d3e42" stroke-width="14" fill="none"/><path d="M0 73 L56 168" stroke="#3d3e42" stroke-width="14" fill="none"/><path d="M135 238 L185 336" stroke="#a9a9a6" stroke-width="15" fill="none"/><path d="M0 323 L42 295" stroke="#444549" stroke-width="8" fill="none"/><path d="M264 327 L336 295 L450 222" stroke="#3a3b3f" stroke-width="20" fill="none"/><path d="M120 140 L185 128" stroke="#55555a" stroke-width="10" fill="none"/><path d="M0 225 L90 175" stroke="#b8b7b3" stroke-width="6" fill="none"/><rect x="142.8" y="47.5" width="5.8" height="6.2" fill="rgba(255,255,255,0.22)" transform="rotate(-33 145.7 50.6)"/><rect x="23.1" y="167.5" width="5.9" height="5.5" fill="rgba(255,255,255,0.22)" transform="rotate(-33 26.1 170.2)"/><rect x="240.3" y="16.4" width="15.4" height="6.8" fill="rgba(0,0,0,0.24)" transform="rotate(-33 248.0 19.8)"/><rect x="20.0" y="194.8" width="15.7" height="3.3" fill="rgba(0,0,0,0.24)" transform="rotate(-33 27.8 196.4)"/><rect x="124.7" y="45.2" width="11.3" height="6.4" fill="rgba(0,0,0,0.24)" transform="rotate(-33 130.3 48.4)"/><rect x="41.8" y="188.5" width="9.1" height="6.3" fill="rgba(255,255,255,0.22)" transform="rotate(-33 46.4 191.6)"/><rect x="20.0" y="66.2" width="13.5" height="5.8" fill="rgba(0,0,0,0.24)" transform="rotate(57 26.8 69.1)"/><rect x="156.4" y="81.1" width="12.7" height="4.5" fill="rgba(0,0,0,0.24)" transform="rotate(-33 162.7 83.3)"/><rect x="232.3" y="289.2" width="8.2" height="8.9" fill="rgba(255,255,255,0.22)" transform="rotate(57 236.3 293.6)"/><rect x="180.5" y="251.3" width="15.3" height="5.5" fill="rgba(0,0,0,0.24)" transform="rotate(-33 188.2 254.0)"/><rect x="30.6" y="184.7" width="8.7" height="5.1" fill="rgba(255,255,255,0.22)" transform="rotate(57 34.9 187.2)"/><rect x="350.9" y="20.1" width="15.4" height="5.8" fill="rgba(0,0,0,0.24)" transform="rotate(-33 358.6 23.1)"/><rect x="23.2" y="232.7" width="8.1" height="5.3" fill="rgba(0,0,0,0.24)" transform="rotate(57 27.3 235.4)"/><rect x="4.3" y="151.9" width="11.7" height="6.0" fill="rgba(255,255,255,0.22)" transform="rotate(-33 10.2 154.9)"/><rect x="124.7" y="243.6" width="9.3" height="8.2" fill="rgba(255,255,255,0.22)" transform="rotate(57 129.3 247.7)"/><rect x="195.1" y="180.2" width="14.0" height="8.2" fill="rgba(255,255,255,0.22)" transform="rotate(-33 202.1 184.3)"/><rect x="179.1" y="118.4" width="15.5" height="3.9" fill="rgba(255,255,255,0.22)" transform="rotate(57 186.9 120.4)"/><rect x="97.3" y="76.2" width="14.1" height="4.1" fill="rgba(255,255,255,0.22)" transform="rotate(57 104.4 78.3)"/><rect x="57.8" y="175.8" width="15.5" height="7.1" fill="rgba(0,0,0,0.24)" transform="rotate(57 65.6 179.4)"/><rect x="272.9" y="222.8" width="10.0" height="8.2" fill="rgba(0,0,0,0.24)" transform="rotate(-33 277.9 226.9)"/><rect x="301.6" y="185.8" width="9.4" height="3.6" fill="rgba(0,0,0,0.24)" transform="rotate(57 306.3 187.6)"/><rect x="23.1" y="20.8" width="9.8" height="3.7" fill="rgba(0,0,0,0.24)" transform="rotate(-33 28.0 22.6)"/><rect x="38.4" y="186.8" width="15.4" height="6.7" fill="rgba(255,255,255,0.22)" transform="rotate(-33 46.1 190.2)"/><rect x="85.8" y="122.9" width="15.5" height="6.6" fill="rgba(255,255,255,0.22)" transform="rotate(57 93.6 126.2)"/><rect x="46.8" y="161.3" width="10.3" height="4.9" fill="rgba(255,255,255,0.22)" transform="rotate(57 51.9 163.7)"/><rect x="330.3" y="246.4" width="14.1" height="4.0" fill="rgba(255,255,255,0.22)" transform="rotate(57 337.4 248.4)"/><rect x="421.6" y="173.0" width="12.6" height="8.5" fill="rgba(0,0,0,0.24)" transform="rotate(-33 427.9 177.2)"/><rect x="127.8" y="213.4" width="12.7" height="4.6" fill="rgba(255,255,255,0.22)" transform="rotate(-33 134.1 215.7)"/><rect x="69.2" y="255.6" width="12.0" height="6.7" fill="rgba(0,0,0,0.24)" transform="rotate(57 75.2 259.0)"/><rect x="334.2" y="61.8" width="14.0" height="7.4" fill="rgba(255,255,255,0.22)" transform="rotate(-33 341.2 65.5)"/><rect x="225.0" y="115.4" width="15.9" height="7.7" fill="rgba(255,255,255,0.22)" transform="rotate(-33 232.9 119.3)"/><rect x="82.2" y="198.7" width="9.9" height="8.6" fill="rgba(0,0,0,0.24)" transform="rotate(57 87.1 203.0)"/><rect x="426.7" y="119.4" width="6.1" height="5.8" fill="rgba(255,255,255,0.22)" transform="rotate(-33 429.8 122.3)"/><rect x="212.1" y="327.1" width="10.3" height="6.9" fill="rgba(0,0,0,0.24)" transform="rotate(-33 217.2 330.6)"/><rect x="31.3" y="217.9" width="13.6" height="7.5" fill="rgba(255,255,255,0.22)" transform="rotate(57 38.2 221.6)"/><rect x="77.4" y="260.4" width="6.0" height="8.7" fill="rgba(0,0,0,0.24)" transform="rotate(57 80.3 264.8)"/><rect x="201.9" y="247.4" width="13.0" height="4.0" fill="rgba(255,255,255,0.22)" transform="rotate(-33 208.4 249.4)"/><rect x="62.2" y="300.3" width="11.7" height="6.6" fill="rgba(255,255,255,0.22)" transform="rotate(-33 68.0 303.6)"/><rect x="419.2" y="48.4" width="5.2" height="7.8" fill="rgba(0,0,0,0.24)" transform="rotate(-33 421.9 52.3)"/><rect x="41.4" y="247.3" width="9.8" height="8.2" fill="rgba(0,0,0,0.24)" transform="rotate(-33 46.2 251.5)"/><rect x="89.7" y="80.7" width="10.5" height="7.6" fill="rgba(255,255,255,0.22)" transform="rotate(57 95.0 84.5)"/><rect x="237.5" y="277.3" width="15.0" height="5.1" fill="rgba(255,255,255,0.22)" transform="rotate(-33 245.0 279.9)"/><rect x="255.5" y="299.3" width="14.1" height="8.3" fill="rgba(255,255,255,0.22)" transform="rotate(57 262.5 303.4)"/><rect x="61.6" y="168.0" width="13.5" height="6.7" fill="rgba(0,0,0,0.24)" transform="rotate(57 68.3 171.3)"/><rect x="61.9" y="45.0" width="11.1" height="5.0" fill="rgba(0,0,0,0.24)" transform="rotate(-33 67.4 47.5)"/><rect x="242.6" y="261.5" width="14.7" height="3.3" fill="rgba(255,255,255,0.22)" transform="rotate(-33 249.9 263.1)"/><rect x="13.4" y="29.0" width="11.2" height="7.6" fill="rgba(0,0,0,0.24)" transform="rotate(57 19.0 32.8)"/><rect x="193.2" y="202.6" width="12.6" height="5.7" fill="rgba(0,0,0,0.24)" transform="rotate(-33 199.5 205.5)"/><rect x="207.5" y="311.7" width="15.2" height="8.4" fill="rgba(255,255,255,0.22)" transform="rotate(57 215.1 315.9)"/><rect x="196.5" y="138.1" width="9.9" height="3.4" fill="rgba(255,255,255,0.22)" transform="rotate(57 201.4 139.8)"/><rect x="25.5" y="222.6" width="14.9" height="3.9" fill="rgba(0,0,0,0.24)" transform="rotate(-33 32.9 224.6)"/><rect x="289.3" y="45.8" width="15.6" height="4.3" fill="rgba(0,0,0,0.24)" transform="rotate(-33 297.1 48.0)"/><rect x="175.8" y="160.7" width="6.8" height="5.6" fill="rgba(0,0,0,0.24)" transform="rotate(-33 179.2 163.5)"/><rect x="149.6" y="63.1" width="6.0" height="5.2" fill="rgba(255,255,255,0.22)" transform="rotate(57 152.6 65.7)"/><rect x="202.1" y="232.5" width="8.6" height="6.7" fill="rgba(0,0,0,0.24)" transform="rotate(57 206.4 235.9)"/><rect x="21.1" y="328.7" width="15.7" height="3.6" fill="rgba(255,255,255,0.22)" transform="rotate(-33 28.9 330.5)"/><rect x="11.2" y="257.4" width="13.3" height="7.9" fill="rgba(0,0,0,0.24)" transform="rotate(57 17.8 261.4)"/><rect x="300.9" y="313.1" width="6.6" height="8.5" fill="rgba(0,0,0,0.24)" transform="rotate(57 304.2 317.4)"/><rect x="308.3" y="28.0" width="13.8" height="4.1" fill="rgba(0,0,0,0.24)" transform="rotate(-33 315.2 30.0)"/><rect x="114.1" y="3.9" width="13.8" height="3.5" fill="rgba(0,0,0,0.24)" transform="rotate(-33 121.0 5.6)"/><rect x="27.4" y="285.0" width="5.1" height="9.0" fill="rgba(255,255,255,0.22)" transform="rotate(57 30.0 289.5)"/><rect x="406.5" y="206.4" width="10.8" height="4.4" fill="rgba(255,255,255,0.22)" transform="rotate(-33 411.9 208.6)"/><rect x="65.0" y="13.5" width="15.3" height="6.8" fill="rgba(0,0,0,0.24)" transform="rotate(-33 72.7 16.9)"/><rect x="88.7" y="145.6" width="8.0" height="7.8" fill="rgba(0,0,0,0.24)" transform="rotate(-33 92.6 149.5)"/><rect x="11.3" y="3.9" width="10.7" height="4.5" fill="rgba(255,255,255,0.22)" transform="rotate(-33 16.6 6.2)"/><rect x="290.7" y="213.9" width="11.0" height="8.3" fill="rgba(0,0,0,0.24)" transform="rotate(57 296.2 218.1)"/><rect x="134.1" y="68.2" width="8.8" height="8.0" fill="rgba(0,0,0,0.24)" transform="rotate(-33 138.5 72.2)"/><rect x="278.3" y="131.8" width="15.8" height="8.0" fill="rgba(255,255,255,0.22)" transform="rotate(57 286.2 135.8)"/><rect x="278.1" y="293.4" width="6.8" height="3.5" fill="rgba(0,0,0,0.24)" transform="rotate(57 281.5 295.2)"/><rect x="385.9" y="221.4" width="11.6" height="7.2" fill="rgba(255,255,255,0.22)" transform="rotate(57 391.7 225.0)"/><rect x="79.5" y="85.9" width="7.9" height="8.8" fill="rgba(0,0,0,0.24)" transform="rotate(-33 83.4 90.3)"/><rect x="242.5" y="80.0" width="7.4" height="4.1" fill="rgba(255,255,255,0.22)" transform="rotate(57 246.2 82.0)"/><rect x="33.9" y="89.8" width="7.7" height="7.7" fill="rgba(255,255,255,0.22)" transform="rotate(-33 37.8 93.6)"/><rect x="363.0" y="45.9" width="9.3" height="4.8" fill="rgba(0,0,0,0.24)" transform="rotate(-33 367.7 48.3)"/><rect x="31.9" y="317.6" width="12.2" height="7.3" fill="rgba(0,0,0,0.24)" transform="rotate(-33 38.0 321.3)"/><rect x="172.0" y="105.7" width="6.6" height="7.3" fill="rgba(0,0,0,0.24)" transform="rotate(57 175.3 109.4)"/><rect x="13.2" y="276.3" width="13.1" height="7.9" fill="rgba(255,255,255,0.22)" transform="rotate(57 19.7 280.2)"/><rect x="228.6" y="166.0" width="14.1" height="6.5" fill="rgba(0,0,0,0.24)" transform="rotate(-33 235.7 169.2)"/><rect x="304.3" y="231.0" width="5.9" height="3.3" fill="rgba(0,0,0,0.24)" transform="rotate(-33 307.3 232.6)"/><rect x="426.2" y="123.0" width="11.1" height="6.8" fill="rgba(0,0,0,0.24)" transform="rotate(57 431.8 126.4)"/><rect x="301.3" y="162.4" width="10.0" height="3.4" fill="rgba(0,0,0,0.24)" transform="rotate(-33 306.3 164.2)"/><rect x="397.4" y="27.9" width="13.2" height="5.8" fill="rgba(0,0,0,0.24)" transform="rotate(-33 404.0 30.8)"/><rect x="377.0" y="75.3" width="7.5" height="6.9" fill="rgba(255,255,255,0.22)" transform="rotate(-33 380.8 78.8)"/><rect x="373.8" y="22.4" width="13.4" height="6.7" fill="rgba(0,0,0,0.24)" transform="rotate(57 380.5 25.7)"/><rect x="28.8" y="45.9" width="12.2" height="7.2" fill="rgba(0,0,0,0.24)" transform="rotate(57 34.9 49.5)"/><rect x="56.1" y="158.3" width="8.0" height="7.0" fill="rgba(0,0,0,0.24)" transform="rotate(57 60.0 161.9)"/><rect x="299.0" y="94.7" width="10.1" height="5.8" fill="rgba(255,255,255,0.22)" transform="rotate(57 304.1 97.6)"/><rect x="394.5" y="65.3" width="15.3" height="3.1" fill="rgba(255,255,255,0.22)" transform="rotate(-33 402.1 66.8)"/><rect x="361.0" y="322.1" width="15.9" height="5.3" fill="rgba(0,0,0,0.24)" transform="rotate(57 369.0 324.8)"/><rect x="415.5" y="22.0" width="6.6" height="6.1" fill="rgba(0,0,0,0.24)" transform="rotate(-33 418.7 25.0)"/><rect x="52.3" y="271.6" width="14.8" height="7.2" fill="rgba(255,255,255,0.22)" transform="rotate(57 59.7 275.2)"/><rect x="400.6" y="158.8" width="6.7" height="8.7" fill="rgba(0,0,0,0.24)" transform="rotate(-33 404.0 163.1)"/><rect x="178.0" y="241.5" width="8.8" height="4.9" fill="rgba(0,0,0,0.24)" transform="rotate(57 182.4 244.0)"/><rect x="-2.4" y="247.6" width="6.3" height="8.6" fill="rgba(0,0,0,0.24)" transform="rotate(57 0.8 251.9)"/><rect x="402.8" y="94.6" width="5.7" height="5.3" fill="rgba(0,0,0,0.24)" transform="rotate(57 405.7 97.2)"/><rect x="27.2" y="308.1" width="14.4" height="4.7" fill="rgba(255,255,255,0.22)" transform="rotate(57 34.4 310.5)"/><rect x="294.0" y="210.7" width="7.7" height="4.6" fill="rgba(0,0,0,0.24)" transform="rotate(-33 297.9 213.0)"/><rect x="78.1" y="121.3" width="14.7" height="7.9" fill="rgba(0,0,0,0.24)" transform="rotate(57 85.4 125.3)"/><rect x="404.6" y="314.0" width="12.9" height="3.3" fill="rgba(0,0,0,0.24)" transform="rotate(-33 411.0 315.6)"/><rect x="197.7" y="248.3" width="10.3" height="8.5" fill="rgba(0,0,0,0.24)" transform="rotate(57 202.9 252.5)"/><rect x="72.7" y="135.5" width="8.3" height="7.4" fill="rgba(0,0,0,0.24)" transform="rotate(57 76.8 139.2)"/><rect x="111.9" y="216.6" width="10.3" height="7.0" fill="rgba(255,255,255,0.22)" transform="rotate(57 117.1 220.1)"/><rect x="283.9" y="22.4" width="11.1" height="5.7" fill="rgba(255,255,255,0.22)" transform="rotate(57 289.4 25.2)"/><rect x="337.8" y="141.4" width="7.7" height="4.0" fill="rgba(0,0,0,0.24)" transform="rotate(-33 341.7 143.4)"/><rect x="136.3" y="119.8" width="14.8" height="7.5" fill="rgba(255,255,255,0.22)" transform="rotate(-33 143.7 123.6)"/><rect x="182.3" y="172.1" width="8.0" height="7.5" fill="rgba(255,255,255,0.22)" transform="rotate(57 186.2 175.9)"/><rect x="255.4" y="116.6" width="6.0" height="8.4" fill="rgba(255,255,255,0.22)" transform="rotate(-33 258.4 120.8)"/><rect x="283.4" y="140.8" width="14.3" height="8.2" fill="rgba(255,255,255,0.22)" transform="rotate(57 290.6 144.9)"/><rect x="6.7" y="235.1" width="15.7" height="5.9" fill="rgba(255,255,255,0.22)" transform="rotate(57 14.5 238.0)"/><rect x="410.8" y="309.2" width="15.7" height="4.5" fill="rgba(255,255,255,0.22)" transform="rotate(57 418.6 311.4)"/><rect x="61.8" y="171.6" width="15.4" height="7.3" fill="rgba(0,0,0,0.24)" transform="rotate(-33 69.5 175.3)"/><rect x="341.7" y="151.6" width="5.0" height="3.8" fill="rgba(0,0,0,0.24)" transform="rotate(-33 344.2 153.4)"/><rect x="11.0" y="236.8" width="11.9" height="6.2" fill="rgba(255,255,255,0.22)" transform="rotate(-33 16.9 239.9)"/><rect x="338.3" y="30.1" width="10.8" height="6.5" fill="rgba(255,255,255,0.22)" transform="rotate(57 343.7 33.4)"/><rect x="95.2" y="197.2" width="10.9" height="9.0" fill="rgba(255,255,255,0.22)" transform="rotate(-33 100.6 201.7)"/><rect x="137.2" y="279.4" width="10.2" height="4.4" fill="rgba(255,255,255,0.22)" transform="rotate(-33 142.4 281.6)"/><rect x="429.5" y="234.3" width="5.6" height="4.2" fill="rgba(0,0,0,0.24)" transform="rotate(57 432.3 236.4)"/><rect x="285.1" y="22.9" width="12.3" height="8.6" fill="rgba(255,255,255,0.22)" transform="rotate(-33 291.2 27.2)"/><rect x="10.9" y="110.7" width="9.0" height="5.4" fill="rgba(255,255,255,0.22)" transform="rotate(57 15.3 113.4)"/><rect x="127.8" y="279.1" width="7.3" height="8.8" fill="rgba(255,255,255,0.22)" transform="rotate(-33 131.5 283.5)"/><rect x="365.0" y="73.3" width="7.9" height="8.3" fill="rgba(255,255,255,0.22)" transform="rotate(-33 369.0 77.4)"/><rect x="275.5" y="200.5" width="10.3" height="8.5" fill="rgba(255,255,255,0.22)" transform="rotate(-33 280.6 204.7)"/><rect x="264.0" y="304.9" width="7.3" height="8.8" fill="rgba(255,255,255,0.22)" transform="rotate(-33 267.7 309.3)"/><rect x="18.4" y="16.5" width="9.9" height="7.3" fill="rgba(255,255,255,0.22)" transform="rotate(57 23.3 20.2)"/><rect x="46.6" y="24.6" width="8.6" height="4.1" fill="rgba(0,0,0,0.24)" transform="rotate(-33 50.9 26.6)"/><rect x="328.7" y="6.2" width="14.2" height="8.9" fill="rgba(255,255,255,0.22)" transform="rotate(57 335.8 10.7)"/><rect x="44.6" y="21.9" width="8.9" height="8.7" fill="rgba(255,255,255,0.22)" transform="rotate(-33 49.0 26.3)"/><rect x="427.2" y="67.2" width="13.5" height="4.9" fill="rgba(0,0,0,0.24)" transform="rotate(57 433.9 69.6)"/><rect x="34.9" y="232.4" width="9.1" height="8.5" fill="rgba(255,255,255,0.22)" transform="rotate(-33 39.5 236.6)"/><rect x="157.9" y="298.7" width="11.9" height="4.5" fill="rgba(0,0,0,0.24)" transform="rotate(-33 163.9 300.9)"/><rect x="179.3" y="121.7" width="5.7" height="8.5" fill="rgba(255,255,255,0.22)" transform="rotate(57 182.1 126.0)"/><rect x="331.8" y="299.0" width="9.0" height="5.0" fill="rgba(0,0,0,0.24)" transform="rotate(57 336.3 301.5)"/><rect x="12.0" y="248.0" width="15.2" height="4.8" fill="rgba(0,0,0,0.24)" transform="rotate(57 19.6 250.4)"/><rect x="265.4" y="268.1" width="5.3" height="4.4" fill="rgba(255,255,255,0.22)" transform="rotate(-33 268.0 270.3)"/><rect x="423.7" y="315.8" width="13.7" height="8.5" fill="rgba(0,0,0,0.24)" transform="rotate(57 430.5 320.0)"/><rect x="52.8" y="162.9" width="13.8" height="7.4" fill="rgba(0,0,0,0.24)" transform="rotate(-33 59.7 166.6)"/><rect x="340.5" y="200.9" width="14.5" height="5.8" fill="rgba(0,0,0,0.24)" transform="rotate(57 347.8 203.7)"/><rect x="261.4" y="169.5" width="13.3" height="4.5" fill="rgba(255,255,255,0.22)" transform="rotate(57 268.1 171.7)"/><rect x="11.9" y="182.6" width="6.8" height="5.6" fill="rgba(255,255,255,0.22)" transform="rotate(57 15.2 185.4)"/><rect x="29.4" y="206.6" width="6.1" height="6.0" fill="rgba(0,0,0,0.24)" transform="rotate(-33 32.5 209.6)"/><rect x="196.1" y="74.4" width="10.1" height="8.3" fill="rgba(255,255,255,0.22)" transform="rotate(57 201.1 78.6)"/><rect x="235.6" y="257.3" width="13.6" height="4.8" fill="rgba(255,255,255,0.22)" transform="rotate(-33 242.4 259.6)"/><rect x="116.9" y="83.0" width="7.2" height="4.5" fill="rgba(255,255,255,0.22)" transform="rotate(57 120.4 85.2)"/><rect x="64.7" y="294.0" width="8.6" height="5.4" fill="rgba(0,0,0,0.24)" transform="rotate(-33 69.0 296.6)"/><rect x="222.2" y="73.2" width="12.2" height="8.9" fill="rgba(255,255,255,0.22)" transform="rotate(-33 228.3 77.6)"/><rect x="206.1" y="273.2" width="15.1" height="3.2" fill="rgba(255,255,255,0.22)" transform="rotate(57 213.6 274.8)"/><rect x="46.0" y="61.0" width="15.2" height="5.2" fill="rgba(0,0,0,0.24)" transform="rotate(-33 53.6 63.6)"/><rect x="199.0" y="83.9" width="6.2" height="6.6" fill="rgba(0,0,0,0.24)" transform="rotate(-33 202.1 87.2)"/><rect x="95.2" y="119.2" width="5.5" height="9.0" fill="rgba(255,255,255,0.22)" transform="rotate(-33 97.9 123.7)"/><rect x="322.5" y="303.9" width="14.0" height="5.5" fill="rgba(255,255,255,0.22)" transform="rotate(-33 329.5 306.6)"/><rect x="272.6" y="23.0" width="13.7" height="6.3" fill="rgba(255,255,255,0.22)" transform="rotate(-33 279.5 26.1)"/><rect x="39.6" y="130.8" width="12.0" height="3.5" fill="rgba(255,255,255,0.22)" transform="rotate(-33 45.6 132.6)"/><rect x="306.8" y="134.7" width="12.3" height="5.5" fill="rgba(255,255,255,0.22)" transform="rotate(57 312.9 137.5)"/><rect x="330.6" y="292.4" width="9.6" height="8.2" fill="rgba(0,0,0,0.24)" transform="rotate(57 335.4 296.5)"/><rect x="160.1" y="64.6" width="7.2" height="3.0" fill="rgba(0,0,0,0.24)" transform="rotate(57 163.7 66.2)"/><rect x="185.0" y="272.6" width="11.4" height="5.2" fill="rgba(0,0,0,0.24)" transform="rotate(57 190.7 275.2)"/><rect x="52.5" y="13.1" width="12.0" height="8.5" fill="rgba(255,255,255,0.22)" transform="rotate(-33 58.5 17.3)"/><rect x="276.7" y="122.1" width="6.6" height="4.7" fill="rgba(0,0,0,0.24)" transform="rotate(-33 280.0 124.4)"/><rect x="409.8" y="32.6" width="13.3" height="7.8" fill="rgba(0,0,0,0.24)" transform="rotate(57 416.5 36.5)"/><rect x="127.9" y="278.0" width="15.7" height="5.9" fill="rgba(255,255,255,0.22)" transform="rotate(-33 135.7 280.9)"/><rect x="410.8" y="126.1" width="12.0" height="8.1" fill="rgba(0,0,0,0.24)" transform="rotate(-33 416.8 130.1)"/><rect x="273.1" y="63.6" width="7.0" height="4.3" fill="rgba(255,255,255,0.22)" transform="rotate(57 276.6 65.8)"/><rect x="229.7" y="124.3" width="6.6" height="8.8" fill="rgba(0,0,0,0.24)" transform="rotate(-33 233.1 128.7)"/><rect x="80.5" y="294.1" width="12.3" height="4.9" fill="rgba(255,255,255,0.22)" transform="rotate(-33 86.7 296.5)"/><rect x="199.0" y="282.4" width="12.1" height="4.8" fill="rgba(255,255,255,0.22)" transform="rotate(57 205.1 284.8)"/><rect x="171.7" y="121.8" width="7.0" height="3.0" fill="rgba(0,0,0,0.24)" transform="rotate(57 175.1 123.3)"/><rect x="202.3" y="146.0" width="14.2" height="7.9" fill="rgba(255,255,255,0.22)" transform="rotate(57 209.4 149.9)"/><rect x="27.2" y="117.5" width="6.0" height="5.7" fill="rgba(0,0,0,0.24)" transform="rotate(57 30.2 120.3)"/><rect x="10.8" y="211.1" width="15.1" height="4.9" fill="rgba(0,0,0,0.24)" transform="rotate(-33 18.3 213.5)"/><rect x="29.9" y="248.5" width="12.2" height="7.7" fill="rgba(255,255,255,0.22)" transform="rotate(57 36.0 252.3)"/><rect x="26.3" y="201.6" width="7.1" height="8.9" fill="rgba(255,255,255,0.22)" transform="rotate(-33 29.9 206.0)"/><rect x="424.2" y="303.7" width="12.5" height="7.3" fill="rgba(255,255,255,0.22)" transform="rotate(-33 430.5 307.3)"/><rect x="371.5" y="200.6" width="6.7" height="8.4" fill="rgba(255,255,255,0.22)" transform="rotate(57 374.9 204.8)"/><rect x="363.4" y="45.9" width="7.3" height="4.6" fill="rgba(0,0,0,0.24)" transform="rotate(57 367.0 48.2)"/><rect x="138.9" y="8.9" width="9.4" height="6.8" fill="rgba(255,255,255,0.22)" transform="rotate(-33 143.6 12.4)"/><rect x="144.4" y="123.3" width="6.3" height="6.2" fill="rgba(0,0,0,0.24)" transform="rotate(57 147.5 126.4)"/><rect x="158.0" y="289.8" width="7.8" height="6.2" fill="rgba(0,0,0,0.24)" transform="rotate(-33 161.9 292.9)"/><rect x="324.1" y="121.4" width="15.9" height="6.5" fill="rgba(255,255,255,0.22)" transform="rotate(57 332.1 124.6)"/><rect x="338.2" y="144.0" width="11.8" height="8.7" fill="rgba(255,255,255,0.22)" transform="rotate(-33 344.1 148.4)"/><rect x="225.7" y="100.3" width="13.1" height="7.5" fill="rgba(255,255,255,0.22)" transform="rotate(57 232.2 104.0)"/><rect x="125.6" y="205.7" width="10.6" height="8.4" fill="rgba(255,255,255,0.22)" transform="rotate(57 130.9 209.9)"/><rect x="99.5" y="215.9" width="5.6" height="6.4" fill="rgba(255,255,255,0.22)" transform="rotate(-33 102.3 219.1)"/><rect x="229.7" y="175.9" width="11.4" height="6.5" fill="rgba(255,255,255,0.22)" transform="rotate(57 235.4 179.2)"/><rect x="278.2" y="155.4" width="5.2" height="7.8" fill="rgba(0,0,0,0.24)" transform="rotate(-33 280.8 159.3)"/><rect x="195.6" y="17.5" width="14.6" height="7.7" fill="rgba(255,255,255,0.22)" transform="rotate(-33 202.9 21.4)"/><rect x="113.1" y="0.6" width="11.5" height="6.5" fill="rgba(0,0,0,0.24)" transform="rotate(57 118.9 3.9)"/><rect x="225.4" y="163.7" width="14.9" height="3.3" fill="rgba(0,0,0,0.24)" transform="rotate(-33 232.9 165.4)"/><rect x="175.2" y="77.9" width="15.0" height="3.6" fill="rgba(0,0,0,0.24)" transform="rotate(-33 182.7 79.7)"/><rect x="292.0" y="62.9" width="7.2" height="6.6" fill="rgba(0,0,0,0.24)" transform="rotate(57 295.6 66.2)"/><rect x="283.4" y="271.2" width="10.6" height="3.4" fill="rgba(0,0,0,0.24)" transform="rotate(-33 288.7 272.9)"/><rect x="440.9" y="241.5" width="12.9" height="3.0" fill="rgba(0,0,0,0.24)" transform="rotate(57 447.3 243.0)"/><rect x="331.9" y="151.6" width="6.9" height="9.0" fill="rgba(255,255,255,0.22)" transform="rotate(57 335.3 156.1)"/><rect x="283.4" y="39.1" width="12.8" height="4.6" fill="rgba(0,0,0,0.24)" transform="rotate(57 289.8 41.4)"/><rect x="192.1" y="260.2" width="8.3" height="8.6" fill="rgba(0,0,0,0.24)" transform="rotate(57 196.2 264.5)"/><rect x="34.5" y="168.0" width="7.9" height="4.4" fill="rgba(0,0,0,0.24)" transform="rotate(-33 38.4 170.2)"/><rect x="421.6" y="247.7" width="7.1" height="5.3" fill="rgba(0,0,0,0.24)" transform="rotate(57 425.1 250.3)"/><rect x="165.7" y="282.7" width="10.2" height="6.2" fill="rgba(255,255,255,0.22)" transform="rotate(57 170.8 285.8)"/><rect x="6.3" y="318.2" width="11.3" height="4.8" fill="rgba(255,255,255,0.22)" transform="rotate(-33 11.9 320.6)"/><rect x="276.9" y="24.5" width="6.6" height="3.2" fill="rgba(255,255,255,0.22)" transform="rotate(-33 280.2 26.1)"/><rect x="411.7" y="114.1" width="12.7" height="3.2" fill="rgba(255,255,255,0.22)" transform="rotate(-33 418.0 115.7)"/><rect x="283.0" y="12.6" width="13.1" height="3.4" fill="rgba(0,0,0,0.24)" transform="rotate(-33 289.6 14.3)"/><rect x="156.2" y="270.5" width="14.7" height="7.5" fill="rgba(0,0,0,0.24)" transform="rotate(-33 163.5 274.3)"/><rect x="169.6" y="81.1" width="6.2" height="3.2" fill="rgba(0,0,0,0.24)" transform="rotate(-33 172.7 82.7)"/><rect x="360.3" y="210.9" width="10.2" height="3.8" fill="rgba(0,0,0,0.24)" transform="rotate(57 365.4 212.8)"/><rect x="286.0" y="97.2" width="9.7" height="3.1" fill="rgba(255,255,255,0.22)" transform="rotate(57 290.8 98.8)"/><rect x="119.7" y="236.3" width="15.0" height="7.6" fill="rgba(0,0,0,0.24)" transform="rotate(57 127.2 240.1)"/><rect x="207.4" y="94.9" width="13.7" height="3.2" fill="rgba(0,0,0,0.24)" transform="rotate(-33 214.2 96.5)"/><rect x="38.8" y="155.2" width="10.9" height="4.3" fill="rgba(0,0,0,0.24)" transform="rotate(-33 44.2 157.3)"/><rect x="36.0" y="272.0" width="9.8" height="6.1" fill="rgba(255,255,255,0.22)" transform="rotate(-33 40.9 275.0)"/><rect x="332.5" y="15.1" width="10.4" height="5.9" fill="rgba(0,0,0,0.24)" transform="rotate(57 337.7 18.1)"/><rect x="75.3" y="162.9" width="15.5" height="6.1" fill="rgba(0,0,0,0.24)" transform="rotate(57 83.0 165.9)"/><rect x="66.3" y="271.7" width="10.5" height="3.7" fill="rgba(0,0,0,0.24)" transform="rotate(-33 71.5 273.5)"/><rect x="30.4" y="261.8" width="11.9" height="5.1" fill="rgba(255,255,255,0.22)" transform="rotate(-33 36.4 264.3)"/><rect x="172.7" y="295.3" width="9.6" height="6.9" fill="rgba(255,255,255,0.22)" transform="rotate(-33 177.6 298.7)"/><rect x="131.8" y="139.5" width="9.2" height="8.3" fill="rgba(255,255,255,0.22)" transform="rotate(-33 136.4 143.6)"/><rect x="203.0" y="175.9" width="8.8" height="5.0" fill="rgba(255,255,255,0.22)" transform="rotate(-33 207.4 178.3)"/><rect x="376.0" y="219.3" width="6.9" height="5.6" fill="rgba(0,0,0,0.24)" transform="rotate(57 379.4 222.1)"/><rect x="254.6" y="38.7" width="12.1" height="7.2" fill="rgba(0,0,0,0.24)" transform="rotate(57 260.6 42.3)"/><rect x="113.9" y="248.8" width="13.0" height="8.8" fill="rgba(0,0,0,0.24)" transform="rotate(-33 120.4 253.2)"/><rect x="267.0" y="114.9" width="8.6" height="4.1" fill="rgba(0,0,0,0.24)" transform="rotate(-33 271.3 117.0)"/><rect x="324.4" y="32.2" width="7.1" height="3.9" fill="rgba(255,255,255,0.22)" transform="rotate(-33 327.9 34.2)"/><rect x="132.4" y="96.4" width="7.2" height="6.8" fill="rgba(255,255,255,0.22)" transform="rotate(57 135.9 99.8)"/><rect x="90.3" y="126.2" width="5.1" height="8.1" fill="rgba(255,255,255,0.22)" transform="rotate(-33 92.9 130.3)"/><rect x="95.1" y="327.2" width="10.1" height="3.9" fill="rgba(0,0,0,0.24)" transform="rotate(57 100.1 329.1)"/><rect x="175.8" y="245.3" width="12.7" height="6.5" fill="rgba(0,0,0,0.24)" transform="rotate(57 182.1 248.6)"/><rect x="374.5" y="220.7" width="12.5" height="6.8" fill="rgba(255,255,255,0.22)" transform="rotate(-33 380.7 224.1)"/><rect x="133.4" y="208.6" width="14.8" height="4.5" fill="rgba(255,255,255,0.22)" transform="rotate(-33 140.9 210.8)"/><rect x="315.5" y="50.9" width="10.3" height="3.1" fill="rgba(0,0,0,0.24)" transform="rotate(57 320.7 52.5)"/><rect x="225.8" y="219.3" width="14.8" height="5.0" fill="rgba(255,255,255,0.22)" transform="rotate(-33 233.2 221.8)"/><rect x="371.6" y="301.6" width="5.4" height="6.3" fill="rgba(255,255,255,0.22)" transform="rotate(-33 374.3 304.7)"/><rect x="348.8" y="312.3" width="6.1" height="6.4" fill="rgba(0,0,0,0.24)" transform="rotate(57 351.8 315.6)"/><rect x="317.4" y="169.1" width="10.7" height="5.5" fill="rgba(0,0,0,0.24)" transform="rotate(57 322.8 171.8)"/><rect x="89.2" y="225.3" width="10.7" height="8.6" fill="rgba(0,0,0,0.24)" transform="rotate(57 94.5 229.6)"/><rect x="272.3" y="211.2" width="8.0" height="5.4" fill="rgba(255,255,255,0.22)" transform="rotate(57 276.3 213.9)"/><rect x="182.7" y="139.3" width="11.4" height="3.7" fill="rgba(255,255,255,0.22)" transform="rotate(57 188.4 141.1)"/><rect x="172.2" y="315.5" width="15.9" height="8.8" fill="rgba(255,255,255,0.22)" transform="rotate(-33 180.2 319.9)"/><rect x="67.1" y="308.4" width="13.9" height="6.8" fill="rgba(255,255,255,0.22)" transform="rotate(-33 74.0 311.8)"/><rect x="248.5" y="72.4" width="8.9" height="6.8" fill="rgba(0,0,0,0.24)" transform="rotate(-33 252.9 75.8)"/><rect x="360.6" y="153.6" width="13.4" height="6.9" fill="rgba(0,0,0,0.24)" transform="rotate(57 367.3 157.0)"/><rect x="207.3" y="260.3" width="7.9" height="5.3" fill="rgba(255,255,255,0.22)" transform="rotate(-33 211.2 262.9)"/><rect x="184.8" y="58.5" width="13.9" height="7.8" fill="rgba(255,255,255,0.22)" transform="rotate(-33 191.7 62.4)"/><rect x="289.6" y="104.1" width="9.7" height="6.8" fill="rgba(0,0,0,0.24)" transform="rotate(57 294.5 107.5)"/><rect x="160.3" y="307.6" width="5.6" height="8.0" fill="rgba(0,0,0,0.24)" transform="rotate(57 163.1 311.6)"/><rect x="346.8" y="45.6" width="12.0" height="3.1" fill="rgba(255,255,255,0.22)" transform="rotate(57 352.8 47.1)"/><rect x="422.5" y="216.8" width="11.7" height="6.5" fill="rgba(0,0,0,0.24)" transform="rotate(57 428.3 220.1)"/><rect x="79.9" y="148.9" width="7.3" height="5.4" fill="rgba(0,0,0,0.24)" transform="rotate(-33 83.5 151.6)"/><rect x="268.1" y="226.7" width="12.4" height="8.4" fill="rgba(0,0,0,0.24)" transform="rotate(-33 274.3 230.8)"/><rect x="372.0" y="62.5" width="10.8" height="7.5" fill="rgba(255,255,255,0.22)" transform="rotate(-33 377.5 66.2)"/><rect x="392.4" y="182.2" width="9.6" height="8.0" fill="rgba(255,255,255,0.22)" transform="rotate(57 397.2 186.2)"/><rect x="244.4" y="160.3" width="12.7" height="4.5" fill="rgba(255,255,255,0.22)" transform="rotate(-33 250.7 162.5)"/><rect x="262.7" y="243.6" width="14.2" height="5.8" fill="rgba(0,0,0,0.24)" transform="rotate(-33 269.8 246.5)"/><rect x="294.5" y="277.5" width="9.7" height="9.0" fill="rgba(0,0,0,0.24)" transform="rotate(57 299.4 282.0)"/><rect x="78.6" y="119.3" width="5.2" height="3.3" fill="rgba(0,0,0,0.24)" transform="rotate(-33 81.2 120.9)"/><rect x="444.2" y="268.3" width="10.6" height="5.9" fill="rgba(0,0,0,0.24)" transform="rotate(-33 449.5 271.3)"/><rect x="10.9" y="236.9" width="8.7" height="8.2" fill="rgba(255,255,255,0.22)" transform="rotate(-33 15.3 241.0)"/><rect x="209.5" y="173.8" width="8.1" height="5.1" fill="rgba(255,255,255,0.22)" transform="rotate(-33 213.5 176.3)"/><rect x="16.7" y="94.3" width="14.1" height="5.4" fill="rgba(0,0,0,0.24)" transform="rotate(57 23.7 97.0)"/><rect x="116.2" y="166.0" width="12.2" height="7.8" fill="rgba(255,255,255,0.22)" transform="rotate(-33 122.3 169.9)"/><rect x="135.9" y="98.8" width="13.6" height="3.2" fill="rgba(0,0,0,0.24)" transform="rotate(-33 142.7 100.4)"/><rect x="393.8" y="181.2" width="9.4" height="3.7" fill="rgba(255,255,255,0.22)" transform="rotate(-33 398.5 183.0)"/><rect x="363.0" y="155.2" width="13.7" height="8.5" fill="rgba(0,0,0,0.24)" transform="rotate(-33 369.9 159.4)"/><rect x="273.8" y="206.8" width="7.3" height="7.0" fill="rgba(255,255,255,0.22)" transform="rotate(-33 277.5 210.3)"/><rect x="335.9" y="31.2" width="14.6" height="5.5" fill="rgba(255,255,255,0.22)" transform="rotate(-33 343.2 34.0)"/><rect x="411.9" y="1.3" width="13.7" height="6.4" fill="rgba(255,255,255,0.22)" transform="rotate(-33 418.7 4.5)"/><rect x="133.3" y="138.3" width="5.2" height="6.4" fill="rgba(0,0,0,0.24)" transform="rotate(57 135.9 141.5)"/><rect x="404.2" y="163.2" width="14.1" height="7.6" fill="rgba(255,255,255,0.22)" transform="rotate(-33 411.2 167.0)"/><rect x="310.5" y="133.1" width="5.2" height="5.3" fill="rgba(0,0,0,0.24)" transform="rotate(-33 313.1 135.8)"/><rect x="415.2" y="325.9" width="13.5" height="6.3" fill="rgba(255,255,255,0.22)" transform="rotate(57 422.0 329.1)"/><rect x="207.6" y="299.0" width="9.7" height="3.1" fill="rgba(0,0,0,0.24)" transform="rotate(-33 212.5 300.5)"/><rect x="436.7" y="286.1" width="14.6" height="3.8" fill="rgba(255,255,255,0.22)" transform="rotate(-33 444.0 288.0)"/><rect x="316.1" y="78.7" width="15.2" height="5.2" fill="rgba(0,0,0,0.24)" transform="rotate(-33 323.7 81.3)"/><rect x="308.6" y="45.4" width="8.2" height="6.3" fill="rgba(255,255,255,0.22)" transform="rotate(-33 312.7 48.6)"/><rect x="294.8" y="297.1" width="12.9" height="3.1" fill="rgba(255,255,255,0.22)" transform="rotate(-33 301.3 298.6)"/><rect x="288.2" y="271.8" width="9.3" height="4.9" fill="rgba(0,0,0,0.24)" transform="rotate(-33 292.8 274.2)"/><rect x="426.7" y="275.8" width="8.5" height="8.7" fill="rgba(0,0,0,0.24)" transform="rotate(-33 431.0 280.1)"/><rect x="206.9" y="52.4" width="9.0" height="6.9" fill="rgba(0,0,0,0.24)" transform="rotate(-33 211.4 55.9)"/><rect x="180.4" y="125.6" width="15.4" height="7.7" fill="rgba(0,0,0,0.24)" transform="rotate(57 188.1 129.4)"/><rect x="124.3" y="16.7" width="14.6" height="7.4" fill="rgba(255,255,255,0.22)" transform="rotate(57 131.6 20.3)"/><rect x="60.1" y="277.1" width="15.7" height="4.5" fill="rgba(255,255,255,0.22)" transform="rotate(57 68.0 279.3)"/><rect x="162.3" y="256.5" width="13.9" height="4.7" fill="rgba(255,255,255,0.22)" transform="rotate(-33 169.3 258.8)"/><rect x="114.3" y="139.8" width="8.2" height="3.8" fill="rgba(0,0,0,0.24)" transform="rotate(-33 118.4 141.7)"/><rect x="442.4" y="47.6" width="8.8" height="3.5" fill="rgba(0,0,0,0.24)" transform="rotate(57 446.8 49.3)"/><rect x="354.6" y="65.6" width="8.4" height="3.3" fill="rgba(255,255,255,0.22)" transform="rotate(-33 358.8 67.2)"/><rect x="311.9" y="307.8" width="13.7" height="5.8" fill="rgba(255,255,255,0.22)" transform="rotate(-33 318.8 310.7)"/><rect x="358.3" y="256.0" width="9.4" height="6.1" fill="rgba(255,255,255,0.22)" transform="rotate(-33 363.0 259.1)"/><rect x="371.5" y="105.6" width="7.1" height="4.2" fill="rgba(255,255,255,0.22)" transform="rotate(-33 375.0 107.7)"/><rect x="310.8" y="118.7" width="9.4" height="6.1" fill="rgba(255,255,255,0.22)" transform="rotate(57 315.5 121.7)"/><rect x="12.8" y="331.9" width="14.5" height="5.2" fill="rgba(255,255,255,0.22)" transform="rotate(57 20.1 334.5)"/><rect x="32.4" y="102.9" width="8.8" height="6.1" fill="rgba(255,255,255,0.22)" transform="rotate(-33 36.8 105.9)"/><rect x="9.4" y="330.1" width="11.5" height="4.3" fill="rgba(0,0,0,0.24)" transform="rotate(57 15.1 332.3)"/><rect x="119.2" y="28.6" width="13.4" height="7.9" fill="rgba(0,0,0,0.24)" transform="rotate(57 125.9 32.6)"/><rect x="106.3" y="10.1" width="15.9" height="5.3" fill="rgba(255,255,255,0.22)" transform="rotate(-33 114.3 12.7)"/><rect x="10.5" y="120.0" width="10.4" height="8.1" fill="rgba(0,0,0,0.24)" transform="rotate(57 15.7 124.0)"/><rect x="382.0" y="212.9" width="12.8" height="3.5" fill="rgba(255,255,255,0.22)" transform="rotate(-33 388.3 214.7)"/><rect x="101.4" y="26.1" width="7.0" height="8.1" fill="rgba(255,255,255,0.22)" transform="rotate(57 104.9 30.1)"/><rect x="103.1" y="239.5" width="5.4" height="4.5" fill="rgba(255,255,255,0.22)" transform="rotate(-33 105.8 241.8)"/><rect x="402.3" y="300.4" width="7.8" height="6.1" fill="rgba(0,0,0,0.24)" transform="rotate(-33 406.2 303.5)"/><rect x="339.4" y="158.4" width="6.6" height="7.5" fill="rgba(0,0,0,0.24)" transform="rotate(-33 342.7 162.2)"/><rect x="297.9" y="98.4" width="13.3" height="3.6" fill="rgba(255,255,255,0.22)" transform="rotate(57 304.6 100.2)"/><rect x="111.1" y="38.8" width="9.2" height="5.6" fill="rgba(0,0,0,0.24)" transform="rotate(57 115.7 41.7)"/><rect x="405.0" y="297.2" width="12.9" height="4.2" fill="rgba(255,255,255,0.22)" transform="rotate(57 411.4 299.3)"/><rect x="410.1" y="72.1" width="14.8" height="3.8" fill="rgba(255,255,255,0.22)" transform="rotate(57 417.5 74.0)"/><rect x="37.7" y="308.7" width="11.9" height="5.7" fill="rgba(255,255,255,0.22)" transform="rotate(-33 43.6 311.6)"/><rect x="367.1" y="158.0" width="6.6" height="4.3" fill="rgba(255,255,255,0.22)" transform="rotate(57 370.4 160.2)"/><rect x="316.3" y="183.7" width="9.8" height="3.9" fill="rgba(255,255,255,0.22)" transform="rotate(-33 321.2 185.7)"/><rect x="106.7" y="6.5" width="8.7" height="4.0" fill="rgba(255,255,255,0.22)" transform="rotate(57 111.0 8.5)"/><rect x="139.8" y="300.0" width="6.7" height="6.1" fill="rgba(0,0,0,0.24)" transform="rotate(-33 143.1 303.0)"/><rect x="347.3" y="308.6" width="14.2" height="3.7" fill="rgba(0,0,0,0.24)" transform="rotate(57 354.4 310.4)"/><rect x="428.8" y="140.7" width="16.0" height="8.6" fill="rgba(255,255,255,0.22)" transform="rotate(57 436.8 145.0)"/><rect x="123.2" y="296.2" width="14.2" height="8.9" fill="rgba(255,255,255,0.22)" transform="rotate(-33 130.2 300.7)"/><rect x="282.6" y="145.5" width="10.6" height="5.7" fill="rgba(0,0,0,0.24)" transform="rotate(57 287.9 148.3)"/><rect x="419.7" y="91.8" width="9.8" height="8.5" fill="rgba(255,255,255,0.22)" transform="rotate(57 424.6 96.1)"/><rect x="251.7" y="44.1" width="10.7" height="4.4" fill="rgba(255,255,255,0.22)" transform="rotate(-33 257.1 46.3)"/><rect x="263.6" y="276.1" width="13.4" height="4.1" fill="rgba(255,255,255,0.22)" transform="rotate(57 270.3 278.1)"/><rect x="295.7" y="208.7" width="11.4" height="4.2" fill="rgba(255,255,255,0.22)" transform="rotate(-33 301.5 210.8)"/><rect x="324.4" y="134.4" width="10.7" height="5.1" fill="rgba(255,255,255,0.22)" transform="rotate(-33 329.7 136.9)"/><rect x="285.0" y="313.0" width="5.2" height="8.5" fill="rgba(255,255,255,0.22)" transform="rotate(-33 287.6 317.3)"/><rect x="386.8" y="84.9" width="11.2" height="8.9" fill="rgba(255,255,255,0.22)" transform="rotate(-33 392.4 89.3)"/><rect x="311.6" y="188.6" width="8.9" height="8.6" fill="rgba(0,0,0,0.24)" transform="rotate(-33 316.0 192.9)"/><rect x="25.1" y="115.6" width="14.0" height="8.2" fill="rgba(255,255,255,0.22)" transform="rotate(-33 32.1 119.7)"/><rect x="315.9" y="126.1" width="8.2" height="3.6" fill="rgba(0,0,0,0.24)" transform="rotate(-33 320.0 128.0)"/><rect x="198.3" y="4.2" width="5.2" height="8.8" fill="rgba(255,255,255,0.22)" transform="rotate(-33 200.9 8.6)"/><rect x="76.5" y="30.1" width="11.1" height="8.7" fill="rgba(255,255,255,0.22)" transform="rotate(57 82.1 34.4)"/><rect x="414.2" y="244.6" width="5.2" height="6.6" fill="rgba(0,0,0,0.24)" transform="rotate(57 416.8 247.9)"/><rect x="230.9" y="234.0" width="8.9" height="3.6" fill="rgba(255,255,255,0.22)" transform="rotate(-33 235.3 235.7)"/><rect x="119.8" y="154.1" width="6.2" height="3.7" fill="rgba(0,0,0,0.24)" transform="rotate(57 122.9 156.0)"/><rect x="240.4" y="73.1" width="6.6" height="6.4" fill="rgba(0,0,0,0.24)" transform="rotate(-33 243.7 76.3)"/><rect x="67.6" y="273.8" width="12.6" height="6.6" fill="rgba(0,0,0,0.24)" transform="rotate(57 73.9 277.1)"/><rect x="9.5" y="323.1" width="13.5" height="5.0" fill="rgba(255,255,255,0.22)" transform="rotate(-33 16.3 325.6)"/><rect x="143.8" y="142.1" width="14.0" height="8.1" fill="rgba(255,255,255,0.22)" transform="rotate(57 150.8 146.1)"/><rect x="228.9" y="318.6" width="7.7" height="5.5" fill="rgba(0,0,0,0.24)" transform="rotate(57 232.8 321.4)"/><rect x="159.7" y="176.0" width="8.6" height="4.2" fill="rgba(0,0,0,0.24)" transform="rotate(-33 164.0 178.1)"/><rect x="94.7" y="136.8" width="13.5" height="8.6" fill="rgba(0,0,0,0.24)" transform="rotate(57 101.5 141.2)"/><rect x="361.5" y="293.3" width="5.4" height="6.8" fill="rgba(255,255,255,0.22)" transform="rotate(-33 364.2 296.7)"/><rect x="299.4" y="89.5" width="11.8" height="4.5" fill="rgba(0,0,0,0.24)" transform="rotate(-33 305.3 91.7)"/><rect x="192.0" y="316.5" width="6.2" height="5.1" fill="rgba(255,255,255,0.22)" transform="rotate(57 195.2 319.0)"/><rect x="24.2" y="318.5" width="5.9" height="6.5" fill="rgba(0,0,0,0.24)" transform="rotate(57 27.2 321.8)"/><rect x="190.5" y="168.4" width="15.1" height="6.5" fill="rgba(255,255,255,0.22)" transform="rotate(57 198.0 171.7)"/><rect x="324.1" y="245.1" width="14.2" height="6.7" fill="rgba(0,0,0,0.24)" transform="rotate(57 331.2 248.4)"/><rect x="287.6" y="64.4" width="10.1" height="6.3" fill="rgba(0,0,0,0.24)" transform="rotate(57 292.7 67.5)"/><rect x="206.7" y="102.1" width="8.7" height="4.1" fill="rgba(0,0,0,0.24)" transform="rotate(-33 211.0 104.2)"/><rect x="432.9" y="128.7" width="6.8" height="8.7" fill="rgba(255,255,255,0.22)" transform="rotate(57 436.3 133.0)"/><rect x="142.3" y="86.7" width="8.3" height="7.6" fill="rgba(255,255,255,0.22)" transform="rotate(-33 146.5 90.6)"/><rect x="23.9" y="289.3" width="12.2" height="6.1" fill="rgba(0,0,0,0.24)" transform="rotate(57 30.1 292.3)"/><rect x="151.4" y="252.4" width="15.9" height="7.1" fill="rgba(0,0,0,0.24)" transform="rotate(-33 159.4 255.9)"/><rect x="181.3" y="220.8" width="12.4" height="6.7" fill="rgba(0,0,0,0.24)" transform="rotate(-33 187.5 224.2)"/><rect x="365.6" y="170.3" width="8.0" height="6.8" fill="rgba(0,0,0,0.24)" transform="rotate(57 369.5 173.7)"/><rect x="314.1" y="134.8" width="5.0" height="7.6" fill="rgba(0,0,0,0.24)" transform="rotate(-33 316.6 138.6)"/><rect x="219.2" y="319.1" width="9.6" height="7.7" fill="rgba(0,0,0,0.24)" transform="rotate(-33 224.0 323.0)"/><rect x="267.0" y="125.0" width="12.6" height="4.7" fill="rgba(255,255,255,0.22)" transform="rotate(57 273.3 127.3)"/><rect x="152.8" y="175.0" width="12.1" height="3.0" fill="rgba(0,0,0,0.24)" transform="rotate(57 158.8 176.5)"/><rect x="441.9" y="125.3" width="7.0" height="4.8" fill="rgba(255,255,255,0.22)" transform="rotate(57 445.4 127.7)"/><rect x="251.9" y="192.6" width="14.0" height="5.0" fill="rgba(0,0,0,0.24)" transform="rotate(-33 258.9 195.1)"/><rect x="270.0" y="78.6" width="7.2" height="5.6" fill="rgba(0,0,0,0.24)" transform="rotate(57 273.6 81.4)"/><rect x="0.7" y="12.8" width="8.3" height="6.2" fill="rgba(255,255,255,0.22)" transform="rotate(57 4.8 15.9)"/><rect x="274.4" y="144.1" width="9.3" height="5.1" fill="rgba(0,0,0,0.24)" transform="rotate(57 279.0 146.7)"/><rect x="152.6" y="316.2" width="10.8" height="3.6" fill="rgba(255,255,255,0.22)" transform="rotate(-33 158.0 318.0)"/><rect x="173.1" y="183.9" width="14.7" height="8.8" fill="rgba(255,255,255,0.22)" transform="rotate(-33 180.4 188.3)"/><rect x="191.8" y="205.8" width="12.6" height="7.5" fill="rgba(255,255,255,0.22)" transform="rotate(57 198.1 209.6)"/><rect x="156.2" y="120.0" width="14.1" height="6.1" fill="rgba(255,255,255,0.22)" transform="rotate(-33 163.2 123.0)"/><rect x="396.6" y="228.4" width="11.9" height="6.1" fill="rgba(0,0,0,0.24)" transform="rotate(57 402.5 231.5)"/><rect x="90.0" y="296.3" width="7.0" height="6.8" fill="rgba(0,0,0,0.24)" transform="rotate(57 93.5 299.6)"/><rect x="152.6" y="331.9" width="12.6" height="3.1" fill="rgba(255,255,255,0.22)" transform="rotate(-33 158.9 333.4)"/><rect x="315.1" y="183.7" width="9.4" height="3.6" fill="rgba(255,255,255,0.22)" transform="rotate(57 319.8 185.5)"/><rect x="6.0" y="54.6" width="14.6" height="8.4" fill="rgba(0,0,0,0.24)" transform="rotate(57 13.3 58.8)"/><rect x="61.4" y="63.6" width="6.6" height="6.1" fill="rgba(0,0,0,0.24)" transform="rotate(-33 64.7 66.6)"/><rect x="6.0" y="22.2" width="14.1" height="6.7" fill="rgba(0,0,0,0.24)" transform="rotate(57 13.1 25.5)"/><rect x="24.7" y="2.0" width="6.6" height="4.4" fill="rgba(255,255,255,0.22)" transform="rotate(57 28.0 4.2)"/><rect x="10.4" y="208.1" width="8.8" height="5.7" fill="rgba(255,255,255,0.22)" transform="rotate(-33 14.8 210.9)"/><rect x="19.7" y="295.4" width="9.8" height="6.7" fill="rgba(255,255,255,0.22)" transform="rotate(-33 24.6 298.8)"/><rect x="15.6" y="308.1" width="8.5" height="8.4" fill="rgba(0,0,0,0.24)" transform="rotate(-33 19.8 312.3)"/><rect x="128.8" y="200.5" width="15.8" height="3.4" fill="rgba(0,0,0,0.24)" transform="rotate(57 136.7 202.2)"/><rect x="299.5" y="192.1" width="8.4" height="8.3" fill="rgba(255,255,255,0.22)" transform="rotate(57 303.7 196.2)"/><rect x="353.3" y="79.0" width="6.9" height="5.3" fill="rgba(255,255,255,0.22)" transform="rotate(-33 356.7 81.7)"/><rect x="393.9" y="129.8" width="6.3" height="6.2" fill="rgba(255,255,255,0.22)" transform="rotate(57 397.0 132.9)"/><rect x="176.6" y="17.7" width="9.6" height="8.5" fill="rgba(0,0,0,0.24)" transform="rotate(-33 181.4 22.0)"/><rect x="170.5" y="155.1" width="7.6" height="3.2" fill="rgba(0,0,0,0.24)" transform="rotate(57 174.3 156.7)"/><rect x="150.6" y="50.0" width="6.0" height="4.6" fill="rgba(0,0,0,0.24)" transform="rotate(-33 153.6 52.3)"/><rect x="54.1" y="146.2" width="6.8" height="5.1" fill="rgba(0,0,0,0.24)" transform="rotate(-33 57.5 148.7)"/><rect x="165.5" y="318.6" width="8.3" height="5.9" fill="rgba(255,255,255,0.22)" transform="rotate(-33 169.6 321.5)"/><rect x="380.5" y="223.7" width="11.6" height="5.6" fill="rgba(0,0,0,0.24)" transform="rotate(57 386.3 226.6)"/><rect x="237.4" y="131.8" width="6.4" height="7.5" fill="rgba(0,0,0,0.24)" transform="rotate(-33 240.6 135.6)"/><rect x="38.5" y="282.1" width="5.3" height="7.3" fill="rgba(255,255,255,0.22)" transform="rotate(57 41.2 285.8)"/><rect x="-0.0" y="236.2" width="13.5" height="4.4" fill="rgba(255,255,255,0.22)" transform="rotate(-33 6.8 238.4)"/><rect x="394.2" y="19.1" width="13.9" height="7.6" fill="rgba(255,255,255,0.22)" transform="rotate(57 401.1 22.8)"/><rect x="320.2" y="25.9" width="6.4" height="7.3" fill="rgba(255,255,255,0.22)" transform="rotate(57 323.4 29.5)"/><rect x="173.9" y="302.9" width="15.3" height="4.1" fill="rgba(255,255,255,0.22)" transform="rotate(-33 181.5 304.9)"/><rect x="357.1" y="228.2" width="5.3" height="7.2" fill="rgba(255,255,255,0.22)" transform="rotate(57 359.7 231.8)"/><rect x="446.5" y="132.5" width="7.0" height="3.7" fill="rgba(0,0,0,0.24)" transform="rotate(-33 450.0 134.4)"/><rect x="325.6" y="235.7" width="9.5" height="6.7" fill="rgba(255,255,255,0.22)" transform="rotate(-33 330.3 239.1)"/><rect x="335.1" y="49.0" width="11.1" height="6.8" fill="rgba(0,0,0,0.24)" transform="rotate(-33 340.6 52.4)"/><rect x="247.6" y="74.1" width="12.9" height="4.5" fill="rgba(255,255,255,0.22)" transform="rotate(57 254.0 76.4)"/><rect x="304.8" y="113.3" width="6.2" height="7.6" fill="rgba(0,0,0,0.24)" transform="rotate(-33 307.9 117.1)"/><rect x="397.6" y="290.1" width="15.7" height="7.1" fill="rgba(255,255,255,0.22)" transform="rotate(-33 405.5 293.6)"/><rect x="136.7" y="259.0" width="13.2" height="3.5" fill="rgba(0,0,0,0.24)" transform="rotate(57 143.3 260.7)"/><rect x="173.1" y="249.0" width="8.1" height="3.5" fill="rgba(0,0,0,0.24)" transform="rotate(-33 177.1 250.8)"/><rect x="185.5" y="308.6" width="10.6" height="7.1" fill="rgba(255,255,255,0.22)" transform="rotate(57 190.8 312.1)"/><rect x="297.7" y="282.0" width="10.4" height="4.1" fill="rgba(0,0,0,0.24)" transform="rotate(-33 302.9 284.0)"/><rect x="365.8" y="183.2" width="11.0" height="8.8" fill="rgba(0,0,0,0.24)" transform="rotate(-33 371.3 187.6)"/><rect x="241.3" y="81.2" width="6.8" height="5.1" fill="rgba(255,255,255,0.22)" transform="rotate(-33 244.8 83.8)"/><rect x="280.2" y="43.8" width="12.4" height="4.4" fill="rgba(255,255,255,0.22)" transform="rotate(57 286.4 46.0)"/><rect x="225.6" y="147.4" width="12.7" height="3.8" fill="rgba(0,0,0,0.24)" transform="rotate(57 231.9 149.3)"/><rect x="258.9" y="77.0" width="11.0" height="7.6" fill="rgba(255,255,255,0.22)" transform="rotate(-33 264.4 80.8)"/><rect x="292.8" y="198.1" width="14.2" height="5.4" fill="rgba(255,255,255,0.22)" transform="rotate(57 299.9 200.9)"/><rect x="306.9" y="2.5" width="7.3" height="3.4" fill="rgba(255,255,255,0.22)" transform="rotate(57 310.6 4.2)"/><rect x="80.9" y="233.4" width="15.6" height="4.0" fill="rgba(255,255,255,0.22)" transform="rotate(57 88.7 235.4)"/><rect x="253.4" y="94.2" width="5.5" height="5.8" fill="rgba(0,0,0,0.24)" transform="rotate(-33 256.1 97.1)"/><rect x="210.6" y="247.5" width="15.8" height="6.4" fill="rgba(255,255,255,0.22)" transform="rotate(57 218.5 250.7)"/><rect x="213.2" y="143.2" width="13.6" height="4.9" fill="rgba(255,255,255,0.22)" transform="rotate(-33 220.0 145.7)"/><rect x="34.8" y="94.2" width="12.2" height="3.5" fill="rgba(0,0,0,0.24)" transform="rotate(57 40.9 95.9)"/><rect x="7.3" y="130.6" width="8.3" height="4.1" fill="rgba(0,0,0,0.24)" transform="rotate(-33 11.4 132.6)"/><rect x="377.5" y="307.3" width="6.1" height="7.3" fill="rgba(255,255,255,0.22)" transform="rotate(-33 380.6 310.9)"/><rect x="273.3" y="124.7" width="8.5" height="5.2" fill="rgba(0,0,0,0.24)" transform="rotate(57 277.6 127.3)"/><rect x="163.4" y="277.1" width="5.6" height="3.6" fill="rgba(0,0,0,0.24)" transform="rotate(-33 166.2 278.9)"/><rect x="407.0" y="331.1" width="15.0" height="8.7" fill="rgba(255,255,255,0.22)" transform="rotate(57 414.5 335.5)"/><rect x="219.0" y="49.5" width="11.6" height="6.8" fill="rgba(255,255,255,0.22)" transform="rotate(57 224.8 52.8)"/><rect x="99.4" y="44.8" width="6.0" height="3.2" fill="rgba(255,255,255,0.22)" transform="rotate(57 102.4 46.4)"/><rect x="83.2" y="239.2" width="5.4" height="6.7" fill="rgba(0,0,0,0.24)" transform="rotate(-33 85.9 242.5)"/><rect x="223.9" y="45.0" width="12.3" height="6.1" fill="rgba(255,255,255,0.22)" transform="rotate(-33 230.1 48.0)"/><rect x="144.9" y="145.2" width="14.9" height="4.0" fill="rgba(255,255,255,0.22)" transform="rotate(-33 152.4 147.2)"/></g><rect width="450" height="335.5" filter="url(#nz)" opacity="0.2"/><path d="M0 36 L56 0" stroke="#de961f" stroke-width="9" stroke-dasharray="30 9" fill="none"/><path d="M0 73 L173 337" stroke="#de961f" stroke-width="9" stroke-dasharray="34 9" stroke-dashoffset="4" fill="none"/><path d="M393 63 L451 168" stroke="#e3cc0a" stroke-width="9.5" stroke-dasharray="36 8" fill="none"/><path d="M264 327 L336 295 L450 222" stroke="#e3cc0a" stroke-width="9.5" stroke-dasharray="36 8" fill="none"/><path d="M110 2 L134 0" stroke="#e3cc0a" stroke-width="7" fill="none"/><polygon points="180,129 213,118 218,125 184,138" fill="rgba(150,120,140,0.6)" stroke="#702070" stroke-width="1.8"/><polygon points="221,118 226,117 228,123 223,124" fill="none" stroke="#702070" stroke-width="1.5"/><polygon points="241,213 247,212 254,263 248,264" fill="rgba(150,120,140,0.6)" stroke="#702070" stroke-width="1.8"/><polygon points="174,157 194,135 227,122 267,128 277,150 258,169 257,209 227,216 208,197" fill="#e39a1c" fill-opacity="0.85" stroke="#ffee00" stroke-width="3" stroke-linejoin="round"/><polygon points="183,161 194,146 222,163 219,132 232,132 239,145 261,136 268,149 242,169 246,204 230,206 225,183" fill="#b43ed0" stroke="#ff0000" stroke-width="3" stroke-linejoin="round"/></svg>
<div class="a" style="left:1417.4px;top:214px;width:41.1px;height:41.4px;background:#475569;border:1.5px solid #e5e7eb;border-radius:4px"></div>
<svg class="a" style="left:1428.0px;top:224.5px;" width="20" height="20" viewBox="0 0 20 20"><g fill="none" stroke="#fff" stroke-width="1.7" stroke-linejoin="round"><path d="M10 2 L18 6 L10 10 L2 6 Z"/><path d="M2 10 L10 14 L18 10"/><path d="M2 14 L10 18 L18 14"/></g></svg>
<div class="a" style="left:1417.4px;top:475px;width:41.1px;height:41.3px;background:#475569;border:1.5px solid #e5e7eb;border-radius:4px"></div>
<svg class="a" style="left:1427.5px;top:486.5px;" width="21" height="17" viewBox="0 0 21 17"><rect x="0" y="1" width="21" height="15" rx="2" fill="#fff"/><path d="M3 13.5 L8 7.5 L11 10.5 L13.5 8.5 L18 13.5 Z" fill="#475569"/><circle cx="6" cy="5" r="1.6" fill="#475569"/></svg>
<div class="a" style="left:1399.5px;top:551.2px;width:450.0px;height:78.1px;background:#fff;border:1px solid #d1d5db;border-radius:5px"></div>
<div class="a" style="left:1408.2px;top:574.2px;width:33.6px;height:32.8px;background:#fff;border:1px solid #d1d5db;border-radius:5px"></div>
<svg class="a" style="left:1415.5px;top:583.5px;" width="19" height="15" viewBox="0 0 19 15"><g fill="none" stroke="#1f2937" stroke-width="1.25" stroke-linecap="round"><path d="M7 10.2 Q6.8 8.6 5.8 7.4 A4.1 4.1 0 1 1 13.2 7.4 Q12.2 8.6 12 10.2 Z"/><path d="M0.6 5.6 H2.6 M16.4 5.6 H18.4 M1.4 1.2 L3 2.3 M17.6 1.2 L16 2.3 M1.4 9.8 L3 8.8 M17.6 9.8 L16 8.8"/><path d="M7.8 3.3 Q8.3 2.6 9 2.5"/></g><path d="M7 11.4 H12 V12.6 Q12 14.6 9.5 14.6 Q7 14.6 7 12.6 Z" fill="#1f2937"/></svg>
<div class="a" style="left:1450.2px;top:574.2px;width:33.6px;height:32.8px;background:#fff;border:1px solid #d1d5db;border-radius:5px"></div>
<svg class="a" style="left:1461.0px;top:583.5px;" width="12" height="16" viewBox="0 0 12 16"><path d="M6 15 C6 15 1 9 1 5.8 A5 5 0 0 1 11 5.8 C11 9 6 15 6 15 Z" fill="none" stroke="#1f2937" stroke-width="1.4" stroke-linejoin="round"/></svg>
<div class="a" style="left:1492.2px;top:582px;width:16px;height:16px;background:#6b6b6b;border-radius:2.5px"></div>
<svg class="a" style="left:1492.2px;top:582.0px;" width="16" height="16" viewBox="0 0 16 16"><path d="M3.5 8.5 L6.6 11.5 L12.5 4.5" fill="none" stroke="#fff" stroke-width="2.2" stroke-linecap="round" stroke-linejoin="round"/></svg>
<div class="a" style="left:1516.8px;top:574.0px;width:39.1px;height:32.8px;background:#eeeeee"></div>
<div class="a" style="left:1518.9px;top:579.0px;width:34.1px;height:22.7px;background:#ff0000;border:1px solid #555"></div>
<div class="t" style="left:1564.4px;top:566.07px;font-size:20px;color:#000;font-weight:normal;letter-spacing:0px;">Bedürfnis, Planung,</div>
<div class="t" style="left:1564.4px;top:596.07px;font-size:20px;color:#000;font-weight:normal;letter-spacing:0px;">Bauvorhaben - B.2022.00005</div>
<div class="a" style="left:1399.0px;top:647.0px;width:25.0px;height:25.0px;background:#e5e7eb;border-radius:50%"></div>
<div class="a" style="left:1405.8px;top:659.3px;width:10.5px;height:2.4px;background:#111"></div>
<div class="t" style="left:1433.4px;top:654.57px;font-size:20px;color:#000;font-weight:normal;letter-spacing:0px;-webkit-text-stroke:0.56px #000;">Beziehung Koordination (1)</div>
<div class="a" style="left:1399.5px;top:680.0px;width:450.0px;height:1.0px;background:#d1d5db"></div>
<div class="a" style="left:1399.5px;top:690.5px;width:450.0px;height:51.0px;background:#fff;border:1px solid #d1d5db;border-radius:5px"></div>
<div class="a" style="left:1408.2px;top:699.2px;width:33.6px;height:33.3px;background:#fff;border:1px solid #d1d5db;border-radius:5px"></div>
<svg class="a" style="left:1415.5px;top:709.0px;" width="19" height="15" viewBox="0 0 19 15"><g fill="none" stroke="#1f2937" stroke-width="1.25" stroke-linecap="round"><path d="M7 10.2 Q6.8 8.6 5.8 7.4 A4.1 4.1 0 1 1 13.2 7.4 Q12.2 8.6 12 10.2 Z"/><path d="M0.6 5.6 H2.6 M16.4 5.6 H18.4 M1.4 1.2 L3 2.3 M17.6 1.2 L16 2.3 M1.4 9.8 L3 8.8 M17.6 9.8 L16 8.8"/><path d="M7.8 3.3 Q8.3 2.6 9 2.5"/></g><path d="M7 11.4 H12 V12.6 Q12 14.6 9.5 14.6 Q7 14.6 7 12.6 Z" fill="#1f2937"/></svg>
<div class="a" style="left:1450.2px;top:699.2px;width:33.6px;height:33.3px;background:#fff;border:1px solid #d1d5db;border-radius:5px"></div>
<svg class="a" style="left:1461.0px;top:708.0px;" width="12" height="16" viewBox="0 0 12 16"><path d="M6 15 C6 15 1 9 1 5.8 A5 5 0 0 1 11 5.8 C11 9 6 15 6 15 Z" fill="none" stroke="#1f2937" stroke-width="1.4" stroke-linejoin="round"/></svg>
<div class="a" style="left:1492.2px;top:699.2px;width:33.3px;height:33.3px;background:#fff;border:1px solid #d1d5db;border-radius:5px"></div>
<svg class="a" style="left:1500.0px;top:709.5px;" width="18" height="13" viewBox="0 0 18 13"><path d="M0.5 6.5 Q9 -3 17.5 6.5 Q9 16 0.5 6.5 Z" fill="#1f2937"/><circle cx="9" cy="6.5" r="3.6" fill="#fff"/><circle cx="9" cy="6.5" r="2.2" fill="#1f2937"/><circle cx="10" cy="5.5" r="0.8" fill="#fff"/></svg>
<div class="a" style="left:1534.2px;top:708.2px;width:14.8px;height:14.8px;background:#6b6b6b;border-radius:2.5px"></div>
<svg class="a" style="left:1534.2px;top:708.2px;" width="14.8" height="14.8" viewBox="0 0 16 16"><path d="M3.5 8.5 L6.6 11.5 L12.5 4.5" fill="none" stroke="#fff" stroke-width="2.2" stroke-linecap="round" stroke-linejoin="round"/></svg>
<div class="a" style="left:1559.0px;top:699.2px;width:62.0px;height:33.3px;background:#eeeeee"></div>
<div class="a" style="left:1561.5px;top:704.0px;width:57.3px;height:23.5px;background:#ffff00;border:1px solid #555"></div>
<div class="t" style="left:1630.0px;top:706.67px;font-size:20px;color:#000;font-weight:normal;letter-spacing:0px;">K.2023.00001</div>
<div class="a" style="left:1381.3px;top:767.3px;width:485.3px;height:440.0px;background:#fff;border:1px solid #d1d5db;border-radius:5px"></div>
<svg class="a" style="left:1398.5px;top:789.5px;" width="20.5" height="20.5" viewBox="0 0 20 20"><g fill="none" stroke="#000" stroke-width="1.7" stroke-linejoin="round"><path d="M10 1.5 L18 5.5 L18 14.5 L10 18.5 L2 14.5 L2 5.5 Z"/><path d="M2 5.5 L10 9.5 L18 5.5 M10 9.5 V18.5"/></g></svg>
<div class="t" style="left:1428.0px;top:789.92px;font-size:21px;color:#000;font-weight:normal;letter-spacing:0px;-webkit-text-stroke:0.59px #000;">B.2022.00005</div>
<div class="a" style="left:1623.0px;top:787.9px;width:24.9px;height:25.0px;background:#fff;border:1.3px solid #2563eb;border-radius:4px"></div>
<div class="a" style="left:1656.8px;top:787.9px;width:24.9px;height:25.0px;background:#fff;border:1.3px solid #2563eb;border-radius:4px"></div>
<div class="a" style="left:1690.0px;top:787.9px;width:24.9px;height:25.0px;background:#fff;border:1.3px solid #2563eb;border-radius:4px"></div>
<div class="a" style="left:1723.8px;top:787.9px;width:24.9px;height:25.0px;background:#fff;border:1.3px solid #2563eb;border-radius:4px"></div>
<div class="a" style="left:1756.8px;top:787.9px;width:24.9px;height:25.0px;background:#fff;border:1.3px solid #2563eb;border-radius:4px"></div>
<div class="a" style="left:1791.0px;top:787.9px;width:24.9px;height:25.0px;background:#fff;border:1.3px solid #2563eb;border-radius:4px"></div>
<svg class="a" style="left:1626.0px;top:792.5px;" width="19" height="14.5" viewBox="0 0 19 14.5"><path d="M1 7.25 Q9.5 -2.5 18 7.25 Q9.5 17 1 7.25 Z" fill="none" stroke="#2563eb" stroke-width="1.6" stroke-linejoin="round"/><circle cx="9.5" cy="7.25" r="3.4" fill="none" stroke="#2563eb" stroke-width="1.6"/><circle cx="8.6" cy="6.3" r="1.1" fill="#2563eb"/></svg>
<svg class="a" style="left:1661.0px;top:791.0px;" width="17" height="17" viewBox="0 0 17 17"><circle cx="8.5" cy="8.5" r="6.2" fill="none" stroke="#2563eb" stroke-width="1.6"/><path d="M0.8 16.3 L16.3 0.8" stroke="#2563eb" stroke-width="1.6" stroke-linecap="round"/></svg>
<svg class="a" style="left:1694.0px;top:791.0px;" width="17.5" height="17" viewBox="0 0 17.5 17"><path d="M1 16.2 L2.2 11.6 L11.8 2 L15.4 5.6 L5.8 15.2 Z" fill="#2563eb"/><path d="M12.8 1 Q13.8 0 14.8 1 L16.4 2.6 Q17.4 3.6 16.4 4.6 L16 5 L12.4 1.4 Z" fill="#2563eb"/><path d="M2.2 13 L4.2 15 L1.2 16 Z" fill="#fff"/></svg>
<svg class="a" style="left:1728.0px;top:791.0px;" width="17.5" height="17" viewBox="0 0 17.5 17"><path d="M8.75 1.2 V11 M4.2 5.6 L8.75 1.2 L13.3 5.6" fill="none" stroke="#2563eb" stroke-width="2" stroke-linecap="round" stroke-linejoin="round"/><path d="M0.5 12 H17 V17 H0.5 Z" fill="#2563eb"/><circle cx="14.2" cy="14.5" r="0.9" fill="#fff"/></svg>
<svg class="a" style="left:1763.5px;top:791.0px;" width="13" height="16.7" viewBox="0 0 13 16.7"><path d="M6.5 15.8 C6.5 15.8 1 9.6 1 6.2 A5.5 5.5 0 0 1 12 6.2 C12 9.6 6.5 15.8 6.5 15.8 Z" fill="none" stroke="#2563eb" stroke-width="1.6" stroke-linejoin="round"/><circle cx="6.5" cy="6" r="2" fill="none" stroke="#2563eb" stroke-width="1.5"/></svg>
<svg class="a" style="left:1795.0px;top:791.0px;" width="17" height="17" viewBox="0 0 17 17"><g fill="none" stroke="#2563eb" stroke-width="1.9"><circle cx="8.5" cy="8.5" r="7.55"/><ellipse cx="8.5" cy="8.5" rx="3.32" ry="7.55"/><path d="M1.30 6.24 H15.70 M1.30 10.77 H15.70"/></g></svg>
<div class="a" style="left:1824.4px;top:787.8px;width:25.6px;height:25.6px;background:#fff;border:1px solid #d1d5db;border-radius:50%"></div>
<svg class="a" style="left:1831.2px;top:796.0px;" width="11.8" height="6.5" viewBox="0 0 11.8 6.5"><path d="M1.1 5.4 L5.9 1.1 L10.700000000000001 5.4" fill="none" stroke="#374151" stroke-width="2.2" stroke-linecap="round" stroke-linejoin="round"/></svg>
<div class="a" style="left:1399.0px;top:832.0px;width:95.6px;height:33.5px;background:#fff;border:1.3px solid #2563eb;border-radius:4px"></div>
<div class="t" style="left:1437.5px;top:841.61px;font-size:14.7px;color:#2563eb;font-weight:normal;letter-spacing:0px;">Öffnen</div>
<svg class="a" style="left:1411.5px;top:843.0px;" width="18" height="12" viewBox="0 0 18 12"><path d="M0.5 6 Q9 -3 17.5 6 Q9 15 0.5 6 Z" fill="#2563eb"/><circle cx="9" cy="6" r="3.5" fill="#fff"/><circle cx="9" cy="6" r="2.1" fill="#2563eb"/><circle cx="10" cy="5" r="0.7" fill="#fff"/></svg>
<div class="a" style="left:1503.2px;top:832.0px;width:121.3px;height:33.5px;background:#fff;border:1.3px solid #2563eb;border-radius:4px"></div>
<div class="t" style="left:1540.0px;top:841.61px;font-size:14.7px;color:#2563eb;font-weight:normal;letter-spacing:0px;">Bearbeiten</div>
<svg class="a" style="left:1516.5px;top:840.5px;" width="16" height="16" viewBox="0 0 16 16"><path d="M1 15 L1.8 11 L10.5 2.3 L13.7 5.5 L5 14.2 Z" fill="#2563eb"/><path d="M11.6 1.2 Q12.6 0.2 13.6 1.2 L14.8 2.4 Q15.8 3.4 14.8 4.4 Z" fill="#2563eb"/></svg>
<div class="a" style="left:1633.0px;top:832.0px;width:171.5px;height:33.5px;background:#fff;border:1.3px solid #2563eb;border-radius:4px"></div>
<div class="t" style="left:1666.0px;top:841.61px;font-size:14.7px;color:#2563eb;font-weight:normal;letter-spacing:0px;">Auf Karte anzeigen</div>
<svg class="a" style="left:1645.5px;top:840.5px;" width="12" height="16" viewBox="0 0 12 16"><path d="M6 15 C6 15 1 9.5 1 5.8 A5 5 0 0 1 11 5.8 C11 9.5 6 15 6 15 Z" fill="none" stroke="#2563eb" stroke-width="1.6"/><circle cx="6" cy="5.8" r="2" fill="none" stroke="#2563eb" stroke-width="1.5"/></svg>
<div class="a" style="left:1399.0px;top:874.0px;width:172.4px;height:33.7px;background:#fff;border:1.3px solid #2563eb;border-radius:4px"></div>
<div class="t" style="left:1435.5px;top:883.71px;font-size:14.7px;color:#2563eb;font-weight:normal;letter-spacing:0px;">Dateien hochladen</div>
<svg class="a" style="left:1411.5px;top:882.5px;" width="16" height="16" viewBox="0 0 16 16"><path d="M8 0.5 L3 5.5 H6.3 V10 H9.7 V5.5 H13 Z" fill="#2563eb"/><path d="M0.5 10.5 V15.5 H15.5 V10.5 H11 V12.3 H5 V10.5 Z" fill="#2563eb"/></svg>
<div class="a" style="left:1580.3px;top:874.0px;width:103.1px;height:33.7px;background:#fff;border:1px solid #d1d5db;border-radius:4px"></div>
<svg class="a" style="left:1593.0px;top:884.0px;" width="4" height="14" viewBox="0 0 4 14"><circle cx="2" cy="2" r="1.8" fill="#374151"/><circle cx="2" cy="7" r="1.8" fill="#374151"/><circle cx="2" cy="12" r="1.8" fill="#374151"/></svg>
<div class="t" style="left:1606.0px;top:883.76px;font-size:14.7px;color:#374151;font-weight:normal;letter-spacing:-0.2px;">Mehr...</div>
<svg class="a" style="left:1659.5px;top:887.5px;" width="11" height="6.5" viewBox="0 0 11 6.5"><path d="M0.9 0.9 L5.5 5.6 L10.1 0.9" fill="none" stroke="#374151" stroke-width="1.8" stroke-linecap="round" stroke-linejoin="round"/></svg>
<div class="a" style="left:1381.5px;top:925.0px;width:485.0px;height:1.0px;background:#d1d5db"></div>
<div class="t" style="left:1395.0px;top:943.07px;font-size:20px;color:#111827;font-weight:normal;letter-spacing:0px;-webkit-text-stroke:0.56px #111827;">Objektnummer</div>
<div class="t" style="left:1395.0px;top:981.82px;font-size:20px;color:#1f2937;font-weight:normal;letter-spacing:0px;">B.2022.00005</div>
<div class="a" style="left:1820.0px;top:977.5px;width:24.7px;height:25.0px;background:#fff;border:1px solid #d1d5db;border-radius:4px;box-shadow:0 1px 1.5px rgba(0,0,0,0.18)"></div>
<svg class="a" style="left:1826.0px;top:983.0px;" width="13" height="13.5" viewBox="0 0 13 13.5"><path d="M5 1 H9.5 L12 3.5 V8.8 Q12 9.8 11 9.8 H6 Q5 9.8 5 8.8 Z" fill="none" stroke="#6b7280" stroke-width="1.4"/><path d="M3.2 4 H2 Q1 4 1 5 V11.8 Q1 12.8 2 12.8 H7 Q8 12.8 8 11.8 V11.5" fill="none" stroke="#6b7280" stroke-width="1.4"/></svg>
<div class="a" style="left:1386.0px;top:1015.0px;width:475.7px;height:1.0px;background:#e5e7eb"></div>
<div class="t" style="left:1395.0px;top:1038.67px;font-size:20px;color:#111827;font-weight:normal;letter-spacing:0px;-webkit-text-stroke:0.56px #111827;">Bezeichnung des Bedürfnisses</div>
<div class="t" style="left:1395.0px;top:1076.57px;font-size:20px;color:#1f2937;font-weight:normal;letter-spacing:0px;">Test Pilatusplatz</div>
<div class="a" style="left:1820.0px;top:1071.6px;width:24.7px;height:25.4px;background:#fff;border:1px solid #d1d5db;border-radius:4px;box-shadow:0 1px 1.5px rgba(0,0,0,0.18)"></div>
<svg class="a" style="left:1826.0px;top:1077.1px;" width="13" height="13.5" viewBox="0 0 13 13.5"><path d="M5 1 H9.5 L12 3.5 V8.8 Q12 9.8 11 9.8 H6 Q5 9.8 5 8.8 Z" fill="none" stroke="#6b7280" stroke-width="1.4"/><path d="M3.2 4 H2 Q1 4 1 5 V11.8 Q1 12.8 2 12.8 H7 Q8 12.8 8 11.8 V11.5" fill="none" stroke="#6b7280" stroke-width="1.4"/></svg>
<div class="a" style="left:1386.0px;top:1110.0px;width:475.7px;height:1.0px;background:#e5e7eb"></div>
<div class="t" style="left:1395.0px;top:1132.07px;font-size:20px;color:#111827;font-weight:normal;letter-spacing:0px;-webkit-text-stroke:0.56px #111827;">Status des Bedürfnisses</div>
<div class="t" style="left:1395.0px;top:1171.07px;font-size:20px;color:#1f2937;font-weight:normal;letter-spacing:0px;">Nicht koordiniert</div>
<div class="a" style="left:1820.0px;top:1166.0px;width:24.7px;height:25.0px;background:#fff;border:1px solid #d1d5db;border-radius:4px;box-shadow:0 1px 1.5px rgba(0,0,0,0.18)"></div>
<svg class="a" style="left:1826.0px;top:1171.5px;" width="13" height="13.5" viewBox="0 0 13 13.5"><path d="M5 1 H9.5 L12 3.5 V8.8 Q12 9.8 11 9.8 H6 Q5 9.8 5 8.8 Z" fill="none" stroke="#6b7280" stroke-width="1.4"/><path d="M3.2 4 H2 Q1 4 1 5 V11.8 Q1 12.8 2 12.8 H7 Q8 12.8 8 11.8 V11.5" fill="none" stroke="#6b7280" stroke-width="1.4"/></svg>
<div class="a" style="left:1347.5px;top:1182.5px;width:572.5px;height:18.0px;background:#fff"></div>
<div class="a" style="left:1339.2px;top:550.3px;width:16.5px;height:84.2px;background:#d1d5db;border:1.5px solid #9ca3af;border-radius:5px"></div>
</body></html>
